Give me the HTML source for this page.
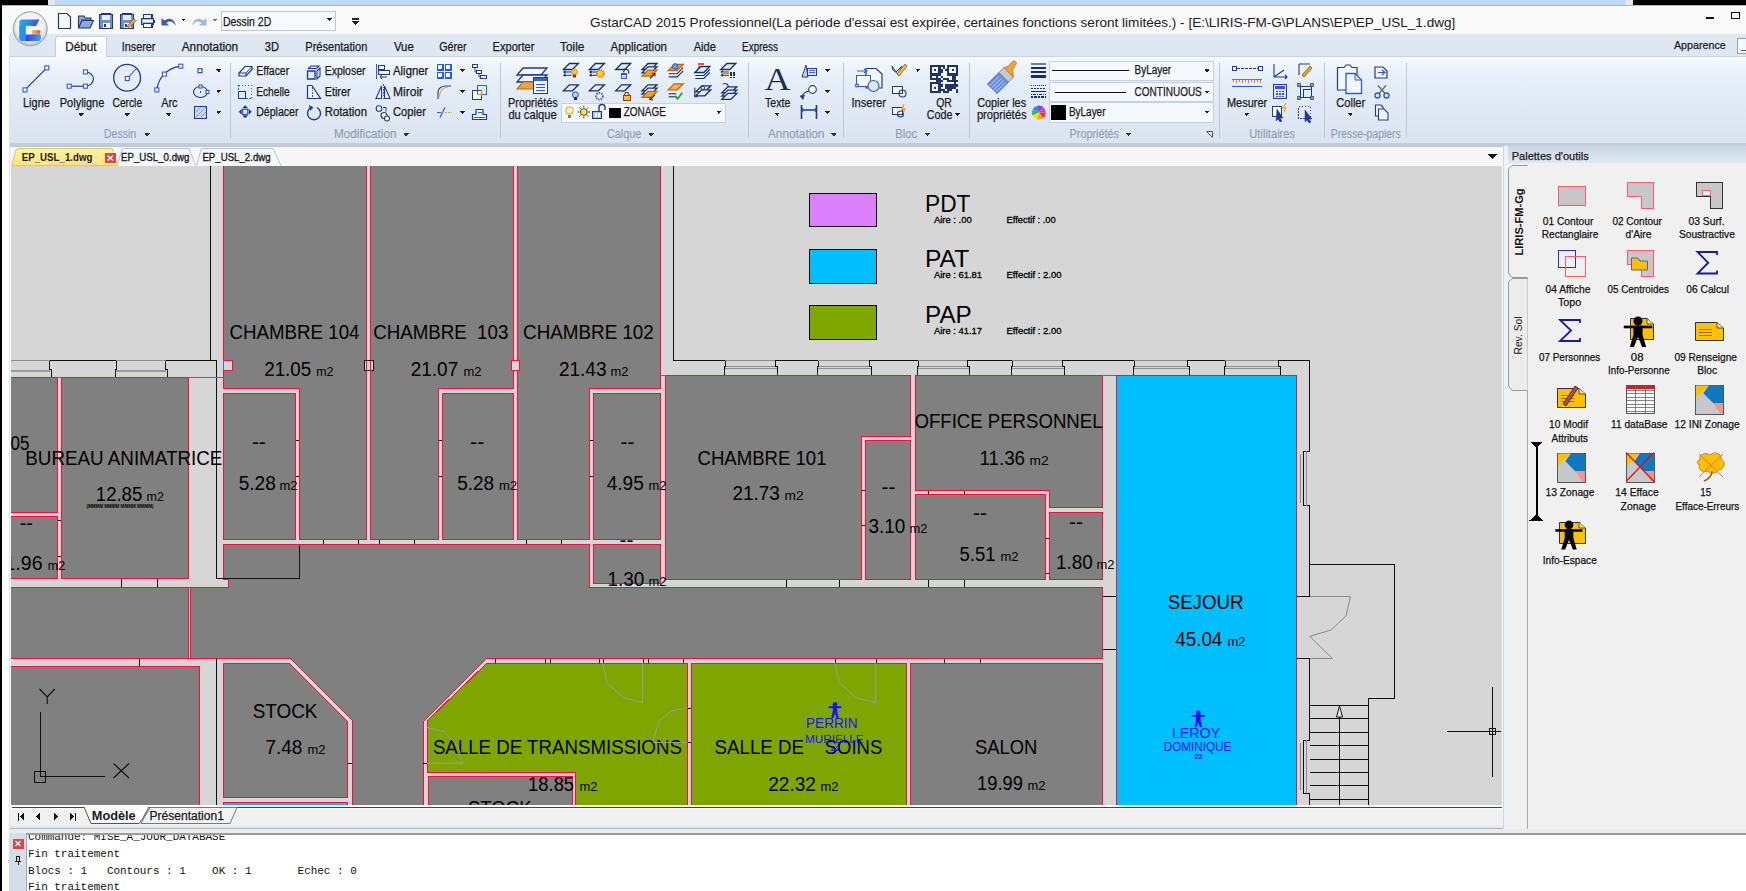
<!DOCTYPE html>
<html><head><meta charset="utf-8"><title>GstarCAD</title>
<style>
html,body{margin:0;padding:0;width:1746px;height:891px;overflow:hidden;background:#fff;}
svg{display:block;}
text{white-space:pre;}
</style></head><body>
<svg width="1746" height="891" viewBox="0 0 1746 891" shape-rendering="crispEdges">
<defs>
<linearGradient id="gRib" x1="0" y1="0" x2="0" y2="1"><stop offset="0" stop-color="#f6f9fd"/><stop offset="0.28" stop-color="#e5edf8"/><stop offset="1" stop-color="#dae4f0"/></linearGradient>
<linearGradient id="gTab" x1="0" y1="0" x2="0" y2="1"><stop offset="0" stop-color="#fdfeff"/><stop offset="1" stop-color="#f3f7fb"/></linearGradient>
<linearGradient id="gYel" x1="0" y1="0" x2="0" y2="1"><stop offset="0" stop-color="#fff4a8"/><stop offset="1" stop-color="#ffe27a"/></linearGradient>
<linearGradient id="gHdr" x1="0" y1="0" x2="0" y2="1"><stop offset="0" stop-color="#c9d6e4"/><stop offset="1" stop-color="#dfe7f1"/></linearGradient>
<radialGradient id="gLogo" cx="0.5" cy="0.4" r="0.6"><stop offset="0" stop-color="#ffffff"/><stop offset="0.8" stop-color="#e6e9ee"/><stop offset="1" stop-color="#9aa3ad"/></radialGradient>
</defs>
<rect x="0" y="0" width="1746" height="891" fill="#ffffff" stroke="none" stroke-width="1" /><rect x="0" y="0" width="48" height="5" fill="#000" stroke="none" stroke-width="1" /><rect x="48" y="0" width="7" height="5" fill="#e8e8e8" stroke="none" stroke-width="1" /><rect x="55" y="0" width="1571" height="5" fill="#bddafd" stroke="none" stroke-width="1" /><rect x="1626" y="0" width="7" height="5" fill="#e8e8e8" stroke="none" stroke-width="1" /><rect x="1633" y="0" width="113" height="5" fill="#000" stroke="none" stroke-width="1" /><rect x="0" y="5" width="2" height="886" fill="#000" stroke="none" stroke-width="1" /><rect x="2" y="5" width="1744" height="886" fill="#ffffff" stroke="none" stroke-width="1" /><rect x="2" y="5" width="1744" height="29" fill="#f9f9f9" stroke="none" stroke-width="1" /><rect x="2" y="5" width="1744" height="1" fill="#b4b4b4" stroke="none" stroke-width="1" /><rect x="2" y="6" width="1744" height="1" fill="#ffffff" stroke="none" stroke-width="1" /><rect x="9" y="34" width="1737" height="23" fill="#dfe8f2" stroke="none" stroke-width="1" /><line x1="9" y1="56.5" x2="1746" y2="56.5" stroke="#c5d3e3" stroke-width="1" /><rect x="9" y="57" width="1737" height="86" fill="url(#gRib)" stroke="none" stroke-width="1" /><rect x="9" y="142.5" width="1737" height="3.5" fill="#bfcddd" stroke="none" stroke-width="1" /><rect x="9" y="34" width="1" height="800" fill="#dbe3ee" stroke="none" stroke-width="1" /><rect x="10" y="146" width="1493" height="20" fill="#f7f7f7" stroke="none" stroke-width="1" /><rect x="10" y="146" width="1493" height="1" fill="#c4c4c4" stroke="none" stroke-width="1" /><rect x="1503" y="146" width="1" height="20" fill="#c4c4c4" stroke="none" stroke-width="1" /><rect x="11" y="166" width="1491" height="640" fill="#d6d6d6" stroke="none" stroke-width="1" /><rect x="1503" y="146" width="5" height="688" fill="#eef1f5" stroke="none" stroke-width="1" /><rect x="1508" y="147" width="238" height="683" fill="#f0f0f0" stroke="none" stroke-width="1" /><rect x="1508" y="146" width="238" height="17" fill="url(#gHdr)" stroke="none" stroke-width="1" /><rect x="10" y="806" width="1493" height="22" fill="#f0f0f0" stroke="none" stroke-width="1" /><rect x="11" y="805" width="1491" height="2" fill="#fafafa" stroke="none" stroke-width="1" /><rect x="12" y="807" width="1490" height="1.3" fill="#454545" stroke="none" stroke-width="1" /><rect x="11" y="808.3" width="1491" height="1.5" fill="#f8f8f8" stroke="none" stroke-width="1" /><line x1="1503.5" y1="146" x2="1503.5" y2="829" stroke="#c9d6e6" stroke-width="1" /><rect x="10" y="826" width="1493" height="2" fill="#e0eaf6" stroke="none" stroke-width="1" /><rect x="10" y="828" width="1493" height="1" fill="#b4b4b4" stroke="none" stroke-width="1" /><rect x="9" y="829" width="1737" height="4" fill="#ececec" stroke="none" stroke-width="1" /><rect x="2" y="833" width="1744" height="58" fill="#ffffff" stroke="none" stroke-width="1" /><rect x="9" y="833" width="18" height="58" fill="#d5dde8" stroke="none" stroke-width="1" /><g shape-rendering="geometricPrecision"><radialGradient id="gRing" cx="0.5" cy="0.45" r="0.55"><stop offset="0" stop-color="#ffffff"/><stop offset="0.75" stop-color="#eef1f5"/><stop offset="0.9" stop-color="#c9d0d8"/><stop offset="1" stop-color="#aab3bd"/></radialGradient><circle cx="30.2" cy="28.8" r="17" fill="url(#gRing)" stroke="#98a2ad" stroke-width="1"/><linearGradient id="gG" x1="0" y1="0" x2="1" y2="0.3"><stop offset="0" stop-color="#1fb0f4"/><stop offset="0.55" stop-color="#2f7cf0"/><stop offset="1" stop-color="#4a2fe4"/></linearGradient><linearGradient id="gG2" x1="0" y1="0" x2="1" y2="0"><stop offset="0" stop-color="#4a2fe4"/><stop offset="1" stop-color="#1fb0f4"/></linearGradient><linearGradient id="gO" x1="0" y1="0" x2="1" y2="0"><stop offset="0" stop-color="#ffc238"/><stop offset="1" stop-color="#ff4a10"/></linearGradient><path d="M19.3,23 Q19.3,19.6 22.5,19.6 H39.5 L36,25.9 H25.9 V34.4 H40.5 V38 Q40.5,41 37.5,41 H22.5 Q19.3,41 19.3,37.5 Z" fill="url(#gG)"/><path d="M25.9,34.4 H40.5 V38 Q40.5,41 37.5,41 H25.9 Z" fill="url(#gG2)"/><path d="M19.3,25.9 H25.9 V41 H22.5 Q19.3,41 19.3,37.5 Z" fill="#2a8ff0" opacity="0.6"/><rect x="25.9" y="25.9" width="5.7" height="8.5" fill="#f4f7fb"/><path d="M31.6,30.2 H40.5 L40,33.7 H31.6 Z" fill="url(#gO)"/></g><path d="M58.5,13.5 H67 L70.5,17 V28.5 H58.5 Z" fill="#f4f7fc" stroke="#1d3a7a" stroke-width="1.2" shape-rendering="geometricPrecision"/><path d="M78.5,16 H84 L85.5,18 H91 V20 H82 L78.5,28 Z M78.5,28 L82,20.5 H93.5 L90,28 Z" fill="#8fa6d6" stroke="#1d3a7a" stroke-width="1.1" shape-rendering="geometricPrecision"/><rect x="99.5" y="14.0" width="13" height="14.5" fill="#6f8fd0" stroke="#1d3a7a" stroke-width="1.2" rx="1.5"/><rect x="102" y="14.5" width="8" height="5" fill="#e8eef8" stroke="none" stroke-width="1" /><rect x="102.5" y="22.5" width="7" height="5.5" fill="#ffffff" stroke="none" stroke-width="1" /><rect x="103.5" y="23.5" width="2" height="3" fill="#1d3a7a" stroke="none" stroke-width="1" /><rect x="120.5" y="14.0" width="13" height="14.5" fill="#6f8fd0" stroke="#1d3a7a" stroke-width="1.2" rx="1.5"/><rect x="123" y="14.5" width="8" height="5" fill="#e8eef8" stroke="none" stroke-width="1" /><rect x="123.5" y="22.5" width="7" height="5.5" fill="#ffffff" stroke="none" stroke-width="1" /><rect x="124.5" y="23.5" width="2" height="3" fill="#1d3a7a" stroke="none" stroke-width="1" /><path d="M127,26.5 L134,18.5 L136,20.5 L129,27.5 Z" fill="#f3b83a" stroke="#7a4b10" stroke-width="0.8" shape-rendering="geometricPrecision"/><rect x="143.5" y="14.5" width="8.5" height="4" fill="#e8eef8" stroke="#1d3a7a" stroke-width="1.2" /><rect x="141.5" y="18.5" width="12.5" height="6" fill="#9db4e4" stroke="#1d3a7a" stroke-width="1.3" rx="1.5"/><rect x="142.5" y="20" width="10.5" height="2" fill="#f4f7fc" stroke="none" stroke-width="1" /><rect x="143.5" y="23.5" width="8.5" height="4" fill="#ffffff" stroke="#1d3a7a" stroke-width="1.2" /><path d="M161.5,18 L161.5,25.5 L169,25.5 L166.5,23 C169,20.5 173,21 175.8,26 C175,19.5 170,16.5 164.5,20.5 Z" fill="#3b5db9" stroke="none" stroke-width="1" shape-rendering="geometricPrecision"/><path d="M181,18.5 L186,18.5 L183.5,21.5 Z" fill="#111" stroke="none" stroke-width="1" /><path d="M206.5,18 L206.5,25.5 L199,25.5 L201.5,23 C199,20.5 195,21 192.2,26 C193,19.5 198,16.5 203.5,20.5 Z" fill="#a3b5dc" stroke="none" stroke-width="1" shape-rendering="geometricPrecision"/><path d="M212.5,18.5 L217.5,18.5 L215,21.5 Z" fill="#777" stroke="none" stroke-width="1" /><rect x="221.5" y="11.5" width="114" height="19" fill="#f7f9fc" stroke="#b9c9dd" stroke-width="1" /><text x="222.9" y="26" font-size="12.5" fill="#1b1b1b" font-family="&quot;Liberation Sans&quot;, sans-serif" textLength="48.4" lengthAdjust="spacingAndGlyphs" stroke="#1b1b1b" stroke-width="0.25">Dessin 2D</text><path d="M326.5,18 L332.5,18 L329.5,21.5 Z" fill="#222" stroke="none" stroke-width="1" /><rect x="352" y="18" width="7" height="1.5" fill="#222" stroke="none" stroke-width="1" /><path d="M352,21 L359,21 L355.5,25 Z" fill="#222" stroke="none" stroke-width="1" /><text x="590.1" y="27.2" font-size="13.5" fill="#202020" font-family="&quot;Liberation Sans&quot;, sans-serif" textLength="865.2" lengthAdjust="spacingAndGlyphs" >GstarCAD 2015 Professionnel(La période d&#x27;essai est expirée, certaines fonctions seront limitées.) - [E:\LIRIS-FM-G\PLANS\EP\EP_USL_1.dwg]</text><rect x="1706" y="17" width="8" height="2" fill="#111" stroke="none" stroke-width="1" /><rect x="1731.5" y="12.5" width="8" height="6" fill="none" stroke="#111" stroke-width="1.3" /><path d="M55.5,57 V39 Q55.5,36.5 58,36.5 H104 Q106.5,36.5 106.5,39 V57" fill="url(#gTab)" stroke="#c2d0e2" stroke-width="1" /><rect x="56" y="54" width="50" height="4" fill="#f8fafd" stroke="none" stroke-width="1" /><text x="65.2" y="51.2" font-size="12" fill="#1b1b1b" font-family="&quot;Liberation Sans&quot;, sans-serif" textLength="31.2" lengthAdjust="spacingAndGlyphs" stroke="#1b1b1b" stroke-width="0.25">Début</text><text x="121.7" y="51.2" font-size="12" fill="#1b1b1b" font-family="&quot;Liberation Sans&quot;, sans-serif" textLength="33.7" lengthAdjust="spacingAndGlyphs" stroke="#1b1b1b" stroke-width="0.25">Inserer</text><text x="181.7" y="51.2" font-size="12" fill="#1b1b1b" font-family="&quot;Liberation Sans&quot;, sans-serif" textLength="56.5" lengthAdjust="spacingAndGlyphs" stroke="#1b1b1b" stroke-width="0.25">Annotation</text><text x="264.8" y="51.2" font-size="12" fill="#1b1b1b" font-family="&quot;Liberation Sans&quot;, sans-serif" textLength="14.3" lengthAdjust="spacingAndGlyphs" stroke="#1b1b1b" stroke-width="0.25">3D</text><text x="305.3" y="51.2" font-size="12" fill="#1b1b1b" font-family="&quot;Liberation Sans&quot;, sans-serif" textLength="62.0" lengthAdjust="spacingAndGlyphs" stroke="#1b1b1b" stroke-width="0.25">Présentation</text><text x="393.9" y="51.2" font-size="12" fill="#1b1b1b" font-family="&quot;Liberation Sans&quot;, sans-serif" textLength="19.9" lengthAdjust="spacingAndGlyphs" stroke="#1b1b1b" stroke-width="0.25">Vue</text><text x="439.2" y="51.2" font-size="12" fill="#1b1b1b" font-family="&quot;Liberation Sans&quot;, sans-serif" textLength="27.4" lengthAdjust="spacingAndGlyphs" stroke="#1b1b1b" stroke-width="0.25">Gérer</text><text x="492.6" y="51.2" font-size="12" fill="#1b1b1b" font-family="&quot;Liberation Sans&quot;, sans-serif" textLength="41.8" lengthAdjust="spacingAndGlyphs" stroke="#1b1b1b" stroke-width="0.25">Exporter</text><text x="560.1" y="51.2" font-size="12" fill="#1b1b1b" font-family="&quot;Liberation Sans&quot;, sans-serif" textLength="24.2" lengthAdjust="spacingAndGlyphs" stroke="#1b1b1b" stroke-width="0.25">Toile</text><text x="610.5" y="51.2" font-size="12" fill="#1b1b1b" font-family="&quot;Liberation Sans&quot;, sans-serif" textLength="56.5" lengthAdjust="spacingAndGlyphs" stroke="#1b1b1b" stroke-width="0.25">Application</text><text x="693.7" y="51.2" font-size="12" fill="#1b1b1b" font-family="&quot;Liberation Sans&quot;, sans-serif" textLength="22.2" lengthAdjust="spacingAndGlyphs" stroke="#1b1b1b" stroke-width="0.25">Aide</text><text x="742.1" y="51.2" font-size="12" fill="#1b1b1b" font-family="&quot;Liberation Sans&quot;, sans-serif" textLength="35.8" lengthAdjust="spacingAndGlyphs" stroke="#1b1b1b" stroke-width="0.25">Express</text><text x="1673.9" y="49.4" font-size="11.5" fill="#1b1b1b" font-family="&quot;Liberation Sans&quot;, sans-serif" textLength="51.8" lengthAdjust="spacingAndGlyphs" stroke="#1b1b1b" stroke-width="0.25">Apparence</text><rect x="1737.5" y="38.5" width="10" height="15" fill="#f4f7fb" stroke="#8e9fb6" stroke-width="1" /><rect x="1741" y="50" width="5" height="1" fill="#555" stroke="none" stroke-width="1" /><line x1="230.5" y1="63" x2="230.5" y2="138" stroke="#b9c8da" stroke-width="1" /><line x1="500.5" y1="63" x2="500.5" y2="138" stroke="#b9c8da" stroke-width="1" /><line x1="748.5" y1="63" x2="748.5" y2="138" stroke="#b9c8da" stroke-width="1" /><line x1="843.5" y1="63" x2="843.5" y2="138" stroke="#b9c8da" stroke-width="1" /><line x1="969.5" y1="63" x2="969.5" y2="138" stroke="#b9c8da" stroke-width="1" /><line x1="1219.5" y1="63" x2="1219.5" y2="138" stroke="#b9c8da" stroke-width="1" /><line x1="1324.5" y1="63" x2="1324.5" y2="138" stroke="#b9c8da" stroke-width="1" /><line x1="1406.5" y1="63" x2="1406.5" y2="138" stroke="#b9c8da" stroke-width="1" /><text x="104.0" y="137.5" font-size="12" fill="#8c9bb3" font-family="&quot;Liberation Sans&quot;, sans-serif" textLength="32.2" lengthAdjust="spacingAndGlyphs" stroke="#8c9bb3" stroke-width="0.12">Dessin</text><path d="M144.2,133 L150.2,133 L147.2,136.5 Z" fill="#333" stroke="none" stroke-width="1" /><text x="334.0" y="137.5" font-size="12" fill="#8c9bb3" font-family="&quot;Liberation Sans&quot;, sans-serif" textLength="62.4" lengthAdjust="spacingAndGlyphs" stroke="#8c9bb3" stroke-width="0.12">Modification</text><path d="M403.2,133 L409.2,133 L406.2,136.5 Z" fill="#333" stroke="none" stroke-width="1" /><text x="607.0" y="137.5" font-size="12" fill="#8c9bb3" font-family="&quot;Liberation Sans&quot;, sans-serif" textLength="34.3" lengthAdjust="spacingAndGlyphs" stroke="#8c9bb3" stroke-width="0.12">Calque</text><path d="M648.1,133 L654.1,133 L651.1,136.5 Z" fill="#333" stroke="none" stroke-width="1" /><text x="768.0" y="137.5" font-size="12" fill="#8c9bb3" font-family="&quot;Liberation Sans&quot;, sans-serif" textLength="56.4" lengthAdjust="spacingAndGlyphs" stroke="#8c9bb3" stroke-width="0.12">Annotation</text><path d="M830.9,133 L836.9,133 L833.9,136.5 Z" fill="#333" stroke="none" stroke-width="1" /><text x="895.3" y="137.5" font-size="12" fill="#8c9bb3" font-family="&quot;Liberation Sans&quot;, sans-serif" textLength="21.8" lengthAdjust="spacingAndGlyphs" stroke="#8c9bb3" stroke-width="0.12">Bloc</text><path d="M924.5,133 L930.5,133 L927.5,136.5 Z" fill="#333" stroke="none" stroke-width="1" /><text x="1069.6" y="137.5" font-size="12" fill="#8c9bb3" font-family="&quot;Liberation Sans&quot;, sans-serif" textLength="49.3" lengthAdjust="spacingAndGlyphs" stroke="#8c9bb3" stroke-width="0.12">Propriétés</text><path d="M1125.6,133 L1131.6,133 L1128.6,136.5 Z" fill="#333" stroke="none" stroke-width="1" /><text x="1249.3" y="137.5" font-size="12" fill="#8c9bb3" font-family="&quot;Liberation Sans&quot;, sans-serif" textLength="45.8" lengthAdjust="spacingAndGlyphs" stroke="#8c9bb3" stroke-width="0.12">Utilitaires</text><text x="1330.8" y="137.5" font-size="12" fill="#8c9bb3" font-family="&quot;Liberation Sans&quot;, sans-serif" textLength="69.9" lengthAdjust="spacingAndGlyphs" stroke="#8c9bb3" stroke-width="0.12">Presse-papiers</text><text x="23.0" y="106.6" font-size="12" fill="#1b1b1b" font-family="&quot;Liberation Sans&quot;, sans-serif" textLength="26.9" lengthAdjust="spacingAndGlyphs" stroke="#1b1b1b" stroke-width="0.25">Ligne</text><text x="59.8" y="106.6" font-size="12" fill="#1b1b1b" font-family="&quot;Liberation Sans&quot;, sans-serif" textLength="44.5" lengthAdjust="spacingAndGlyphs" stroke="#1b1b1b" stroke-width="0.25">Polyligne</text><path d="M78.3,113.1 L84.3,113.1 L81.3,116.6 Z" fill="#222" stroke="none" stroke-width="1" /><text x="112.5" y="106.6" font-size="12" fill="#1b1b1b" font-family="&quot;Liberation Sans&quot;, sans-serif" textLength="29.6" lengthAdjust="spacingAndGlyphs" stroke="#1b1b1b" stroke-width="0.25">Cercle</text><path d="M124.3,113.1 L130.3,113.1 L127.3,116.6 Z" fill="#222" stroke="none" stroke-width="1" /><text x="161.3" y="106.6" font-size="12" fill="#1b1b1b" font-family="&quot;Liberation Sans&quot;, sans-serif" textLength="16.2" lengthAdjust="spacingAndGlyphs" stroke="#1b1b1b" stroke-width="0.25">Arc</text><path d="M165.6,113.1 L171.6,113.1 L168.6,116.6 Z" fill="#222" stroke="none" stroke-width="1" /><path d="M215.7,69.0 L221.7,69.0 L218.7,72.5 Z" fill="#222" stroke="none" stroke-width="1" /><path d="M215.7,89.5 L221.7,89.5 L218.7,93 Z" fill="#222" stroke="none" stroke-width="1" /><path d="M215.7,110.5 L221.7,110.5 L218.7,114 Z" fill="#222" stroke="none" stroke-width="1" /><text x="256.2" y="74.8" font-size="12" fill="#1b1b1b" font-family="&quot;Liberation Sans&quot;, sans-serif" textLength="33.0" lengthAdjust="spacingAndGlyphs" stroke="#1b1b1b" stroke-width="0.25">Effacer</text><text x="256.2" y="95.5" font-size="12" fill="#1b1b1b" font-family="&quot;Liberation Sans&quot;, sans-serif" textLength="33.5" lengthAdjust="spacingAndGlyphs" stroke="#1b1b1b" stroke-width="0.25">Echelle</text><text x="256.2" y="116" font-size="12" fill="#1b1b1b" font-family="&quot;Liberation Sans&quot;, sans-serif" textLength="42.3" lengthAdjust="spacingAndGlyphs" stroke="#1b1b1b" stroke-width="0.25">Déplacer</text><text x="324.7" y="74.8" font-size="12" fill="#1b1b1b" font-family="&quot;Liberation Sans&quot;, sans-serif" textLength="40.8" lengthAdjust="spacingAndGlyphs" stroke="#1b1b1b" stroke-width="0.25">Exploser</text><text x="324.7" y="95.5" font-size="12" fill="#1b1b1b" font-family="&quot;Liberation Sans&quot;, sans-serif" textLength="25.8" lengthAdjust="spacingAndGlyphs" stroke="#1b1b1b" stroke-width="0.25">Etirer</text><text x="324.7" y="116" font-size="12" fill="#1b1b1b" font-family="&quot;Liberation Sans&quot;, sans-serif" textLength="42.3" lengthAdjust="spacingAndGlyphs" stroke="#1b1b1b" stroke-width="0.25">Rotation</text><text x="393.0" y="74.8" font-size="12" fill="#1b1b1b" font-family="&quot;Liberation Sans&quot;, sans-serif" textLength="35.4" lengthAdjust="spacingAndGlyphs" stroke="#1b1b1b" stroke-width="0.25">Aligner</text><text x="393.0" y="95.5" font-size="12" fill="#1b1b1b" font-family="&quot;Liberation Sans&quot;, sans-serif" textLength="30.1" lengthAdjust="spacingAndGlyphs" stroke="#1b1b1b" stroke-width="0.25">Miroir</text><text x="393.0" y="116" font-size="12" fill="#1b1b1b" font-family="&quot;Liberation Sans&quot;, sans-serif" textLength="33.0" lengthAdjust="spacingAndGlyphs" stroke="#1b1b1b" stroke-width="0.25">Copier</text><path d="M459.4,69.0 L465.4,69.0 L462.4,72.5 Z" fill="#222" stroke="none" stroke-width="1" /><path d="M459.4,90.0 L465.4,90.0 L462.4,93.5 Z" fill="#222" stroke="none" stroke-width="1" /><path d="M459.4,110.5 L465.4,110.5 L462.4,114 Z" fill="#222" stroke="none" stroke-width="1" /><text x="508.1" y="106.8" font-size="12" fill="#1b1b1b" font-family="&quot;Liberation Sans&quot;, sans-serif" textLength="49.7" lengthAdjust="spacingAndGlyphs" stroke="#1b1b1b" stroke-width="0.25">Propriétés</text><text x="508.4" y="118.7" font-size="12" fill="#1b1b1b" font-family="&quot;Liberation Sans&quot;, sans-serif" textLength="48.3" lengthAdjust="spacingAndGlyphs" stroke="#1b1b1b" stroke-width="0.25">du calque</text><rect x="561.5" y="103.5" width="164" height="19" fill="#f5f8fc" stroke="#c3d1e3" stroke-width="1" /><rect x="609" y="107.5" width="11.5" height="10.5" fill="#000" stroke="none" stroke-width="1" /><text x="623.7" y="116" font-size="12" fill="#1b1b1b" font-family="&quot;Liberation Sans&quot;, sans-serif" textLength="42.3" lengthAdjust="spacingAndGlyphs" stroke="#1b1b1b" stroke-width="0.25">ZONAGE</text><path d="M715.9,110.5 L721.9,110.5 L718.9,114 Z" fill="#222" stroke="none" stroke-width="1" /><text x="764.5" y="89.5" font-size="31" fill="#1c2d55" font-family="&quot;Liberation Serif&quot;, serif" textLength="26" lengthAdjust="spacingAndGlyphs" >A</text><text x="765.1" y="106.8" font-size="12" fill="#1b1b1b" font-family="&quot;Liberation Sans&quot;, sans-serif" textLength="25.2" lengthAdjust="spacingAndGlyphs" stroke="#1b1b1b" stroke-width="0.25">Texte</text><path d="M774.2,112.5 L780.2,112.5 L777.2,116 Z" fill="#222" stroke="none" stroke-width="1" /><path d="M824.4,69.0 L830.4,69.0 L827.4,72.5 Z" fill="#222" stroke="none" stroke-width="1" /><path d="M824.4,90.0 L830.4,90.0 L827.4,93.5 Z" fill="#222" stroke="none" stroke-width="1" /><path d="M824.4,110.5 L830.4,110.5 L827.4,114 Z" fill="#222" stroke="none" stroke-width="1" /><text x="851.5" y="106.8" font-size="12" fill="#1b1b1b" font-family="&quot;Liberation Sans&quot;, sans-serif" textLength="34.4" lengthAdjust="spacingAndGlyphs" stroke="#1b1b1b" stroke-width="0.25">Inserer</text><path d="M914.9,68.5 L920.9,68.5 L917.9,72 Z" fill="#222" stroke="none" stroke-width="1" /><text x="936.2" y="106.8" font-size="12" fill="#1b1b1b" font-family="&quot;Liberation Sans&quot;, sans-serif" textLength="15.7" lengthAdjust="spacingAndGlyphs" stroke="#1b1b1b" stroke-width="0.25">QR</text><text x="926.7" y="118.7" font-size="12" fill="#1b1b1b" font-family="&quot;Liberation Sans&quot;, sans-serif" textLength="25.7" lengthAdjust="spacingAndGlyphs" stroke="#1b1b1b" stroke-width="0.25">Code</text><path d="M954.6,112.5 L960.6,112.5 L957.6,116 Z" fill="#222" stroke="none" stroke-width="1" /><text x="977.2" y="106.8" font-size="12" fill="#1b1b1b" font-family="&quot;Liberation Sans&quot;, sans-serif" textLength="48.9" lengthAdjust="spacingAndGlyphs" stroke="#1b1b1b" stroke-width="0.25">Copier les</text><text x="976.9" y="118.7" font-size="12" fill="#1b1b1b" font-family="&quot;Liberation Sans&quot;, sans-serif" textLength="49.6" lengthAdjust="spacingAndGlyphs" stroke="#1b1b1b" stroke-width="0.25">propriétés</text><rect x="1049.5" y="61.5" width="164" height="19" fill="#f5f8fc" stroke="#c3d1e3" stroke-width="1" /><rect x="1049.5" y="82" width="164" height="19" fill="#f5f8fc" stroke="#c3d1e3" stroke-width="1" /><rect x="1049.5" y="102.5" width="164" height="20" fill="#f5f8fc" stroke="#c3d1e3" stroke-width="1" /><line x1="1051.5" y1="70.5" x2="1128.5" y2="70.5" stroke="#111" stroke-width="1.2" /><text x="1134.6" y="74.3" font-size="12" fill="#1b1b1b" font-family="&quot;Liberation Sans&quot;, sans-serif" textLength="36.6" lengthAdjust="spacingAndGlyphs" stroke="#1b1b1b" stroke-width="0.25">ByLayer</text><path d="M1204,68.8 L1210,68.8 L1207,72.3 Z" fill="#222" stroke="none" stroke-width="1" /><line x1="1055" y1="92.5" x2="1126" y2="92.5" stroke="#111" stroke-width="1.2" /><text x="1134.6" y="95.5" font-size="12" fill="#1b1b1b" font-family="&quot;Liberation Sans&quot;, sans-serif" textLength="67.2" lengthAdjust="spacingAndGlyphs" stroke="#1b1b1b" stroke-width="0.25">CONTINUOUS</text><path d="M1204,90.5 L1210,90.5 L1207,94 Z" fill="#222" stroke="none" stroke-width="1" /><rect x="1051" y="105" width="15" height="15" fill="#000" stroke="none" stroke-width="1" /><text x="1068.9" y="116" font-size="12" fill="#1b1b1b" font-family="&quot;Liberation Sans&quot;, sans-serif" textLength="36.6" lengthAdjust="spacingAndGlyphs" stroke="#1b1b1b" stroke-width="0.25">ByLayer</text><path d="M1204,110.5 L1210,110.5 L1207,114 Z" fill="#222" stroke="none" stroke-width="1" /><path d="M1206.5,131.5 H1212.5 V137.5 M1207,132 L1212,137" fill="none" stroke="#555" stroke-width="1" shape-rendering="geometricPrecision"/><text x="1226.9" y="106.8" font-size="12" fill="#1b1b1b" font-family="&quot;Liberation Sans&quot;, sans-serif" textLength="40.4" lengthAdjust="spacingAndGlyphs" stroke="#1b1b1b" stroke-width="0.25">Mesurer</text><path d="M1243.7,112.5 L1249.7,112.5 L1246.7,116 Z" fill="#222" stroke="none" stroke-width="1" /><text x="1336.3" y="106.8" font-size="12" fill="#1b1b1b" font-family="&quot;Liberation Sans&quot;, sans-serif" textLength="28.9" lengthAdjust="spacingAndGlyphs" stroke="#1b1b1b" stroke-width="0.25">Coller</text><path d="M1347.3,112.5 L1353.3,112.5 L1350.3,116 Z" fill="#222" stroke="none" stroke-width="1" /><path d="M25,89.9 L46.8,67.9" fill="none" stroke="#1f3b8c" stroke-width="1.2" shape-rendering="geometricPrecision"/><rect x="23.0" y="87.9" width="4" height="4" fill="#fff" stroke="#2f5bd6" stroke-width="1.1" shape-rendering="geometricPrecision"/><rect x="44.8" y="65.9" width="4" height="4" fill="#fff" stroke="#2f5bd6" stroke-width="1.1" shape-rendering="geometricPrecision"/><path d="M69.2,86.2 H85.4" fill="none" stroke="#1f3b8c" stroke-width="1.2" shape-rendering="geometricPrecision"/><path d="M85.4,71.9 C96,72 96,86 85.4,86.2" fill="none" stroke="#1f3b8c" stroke-width="1.2" shape-rendering="geometricPrecision"/><rect x="67.2" y="84.2" width="4" height="4" fill="#fff" stroke="#2f5bd6" stroke-width="1.1" shape-rendering="geometricPrecision"/><rect x="83.4" y="84.2" width="4" height="4" fill="#fff" stroke="#2f5bd6" stroke-width="1.1" shape-rendering="geometricPrecision"/><rect x="83.4" y="69.9" width="4" height="4" fill="#fff" stroke="#2f5bd6" stroke-width="1.1" shape-rendering="geometricPrecision"/><circle cx="127.1" cy="77.7" r="13.4" fill="#e6edf8" stroke="#1f3b8c" stroke-width="1.3" shape-rendering="geometricPrecision"/><path d="M127.3,78.5 L136,69" fill="none" stroke="#2f5bd6" stroke-width="1.1" shape-rendering="geometricPrecision"/><rect x="125.3" y="76.5" width="4" height="4" fill="#fff" stroke="#2f5bd6" stroke-width="1.1" shape-rendering="geometricPrecision"/><path d="M156.8,89.9 C158,82 161,77 164.4,74.1 C169,69 175,67 180.8,66.2" fill="none" stroke="#1f3b8c" stroke-width="1.2" shape-rendering="geometricPrecision"/><rect x="154.8" y="87.9" width="4" height="4" fill="#fff" stroke="#2f5bd6" stroke-width="1.1" shape-rendering="geometricPrecision"/><rect x="162.4" y="72.1" width="4" height="4" fill="#fff" stroke="#2f5bd6" stroke-width="1.1" shape-rendering="geometricPrecision"/><rect x="178.8" y="64.2" width="4" height="4" fill="#fff" stroke="#2f5bd6" stroke-width="1.1" shape-rendering="geometricPrecision"/><rect x="198.0" y="68.8" width="4" height="4" fill="#fff" stroke="#1f3b8c" stroke-width="1.1" shape-rendering="geometricPrecision"/><ellipse cx="200.5" cy="92" rx="7" ry="5.5" fill="none" stroke="#1f3b8c" stroke-width="1.2" shape-rendering="geometricPrecision"/><rect x="199.0" y="85.0" width="3" height="3" fill="#fff" stroke="#2f5bd6" stroke-width="1.1" shape-rendering="geometricPrecision"/><rect x="206.0" y="90.5" width="3" height="3" fill="#fff" stroke="#2f5bd6" stroke-width="1.1" shape-rendering="geometricPrecision"/><circle cx="200.5" cy="92" r="1" fill="#1f3b8c"/><rect x="194.5" y="106.5" width="12" height="12" fill="#c9d6ee" stroke="#1f3b8c" stroke-width="1.2" /><path d="M196,112 L201,107 M196,117 L206,107 M201,117 L206,112" fill="none" stroke="#7f9ad6" stroke-width="1" shape-rendering="geometricPrecision"/><path d="M239,73.0 L245,66.5 H252 V69.5 L246,76.0 H239 Z" fill="#f0f4fb" stroke="#1f3b8c" stroke-width="1.2" shape-rendering="geometricPrecision"/><path d="M239,73.0 H246 L252,66.5 M246,73.0 V76.0" fill="none" stroke="#1f3b8c" stroke-width="1" shape-rendering="geometricPrecision"/><rect x="238.5" y="85.5" width="13" height="13" fill="none" stroke="#2f5bd6" stroke-width="1" stroke-dasharray="1.5,1.5"/><rect x="238.5" y="91.5" width="7" height="7" fill="none" stroke="#1f3b8c" stroke-width="1.3" /><path d="M245.2,105.3 L242.2,108.3 H248.2 Z M245.2,118.3 L242.2,115.3 H248.2 Z M238.7,111.8 L241.7,108.8 V114.8 Z M251.7,111.8 L248.7,108.8 V114.8 Z" fill="#1f3b8c" stroke="none" stroke-width="1.1" shape-rendering="geometricPrecision"/><rect x="242.7" y="109.3" width="5" height="5" fill="#e8eefa" stroke="#2f5bd6" stroke-width="1.2" shape-rendering="geometricPrecision"/><path d="M307.5,71 H315 V79 H307.5 Z" fill="#e6ecf8" stroke="#1f3b8c" stroke-width="1.3" shape-rendering="geometricPrecision"/><path d="M308.5,68.5 L311,66 H319 L316.5,68.5 Z" fill="#e6ecf8" stroke="#1f3b8c" stroke-width="1.1" shape-rendering="geometricPrecision"/><path d="M317,71 L320,68 V76 L317,79 Z" fill="#e6ecf8" stroke="#1f3b8c" stroke-width="1.1" shape-rendering="geometricPrecision"/><path d="M307.5,85.5 H312 L320.5,98.5 H307.5 Z" fill="#eef2fa" stroke="#1f3b8c" stroke-width="1.2" shape-rendering="geometricPrecision"/><line x1="312.5" y1="87" x2="312.5" y2="98" stroke="#2f5bd6" stroke-width="1" stroke-dasharray="1.5,1.2"/><path d="M311,107.5 A6.5,6.5 0 1 0 317,107.5" fill="none" stroke="#1f3b8c" stroke-width="1.4" shape-rendering="geometricPrecision"/><path d="M309,105.5 L313,107.5 L310,110.5" fill="#1f3b8c" stroke="#1f3b8c" stroke-width="0.8" shape-rendering="geometricPrecision"/><line x1="376.5" y1="64" x2="376.5" y2="79" stroke="#2f5bd6" stroke-width="1.2" /><rect x="378.5" y="65.5" width="6" height="4" fill="#eef2fa" stroke="#1f3b8c" stroke-width="1.1" /><rect x="378.5" y="70.5" width="11" height="4" fill="#eef2fa" stroke="#1f3b8c" stroke-width="1.1" /><path d="M387,77 H380 M382,75 L380,77 L382,79" fill="none" stroke="#1f3b8c" stroke-width="1" shape-rendering="geometricPrecision"/><path d="M381.5,86 L376,98.5 H381.5 Z M384.5,86 L390,98.5 H384.5 Z" fill="#eef2fa" stroke="#1f3b8c" stroke-width="1.1" shape-rendering="geometricPrecision"/><line x1="383" y1="84" x2="383" y2="100" stroke="#2f5bd6" stroke-width="1" stroke-dasharray="1.5,1.2"/><circle cx="379" cy="108.5" r="2.8" fill="#fff" stroke="#1f3b8c" stroke-width="1.1" shape-rendering="geometricPrecision"/><circle cx="384" cy="115.5" r="3" fill="#fff" stroke="#1f3b8c" stroke-width="1.1" shape-rendering="geometricPrecision"/><circle cx="387" cy="118.5" r="2.5" fill="#fff" stroke="#1f3b8c" stroke-width="1.1" shape-rendering="geometricPrecision"/><path d="M383,107.5 H386 V111.5" fill="none" stroke="#1f3b8c" stroke-width="1" shape-rendering="geometricPrecision"/><rect x="437.5" y="64.5" width="5.5" height="5.5" fill="#fff" stroke="#2f5bd6" stroke-width="1.2" /><rect x="437.5" y="72.5" width="5.5" height="5.5" fill="#fff" stroke="#2f5bd6" stroke-width="1.2" /><rect x="445.5" y="64.5" width="5.5" height="5.5" fill="#fff" stroke="#2f5bd6" stroke-width="1.2" /><rect x="445.5" y="72.5" width="5.5" height="5.5" fill="#fff" stroke="#2f5bd6" stroke-width="1.2" /><path d="M438,99 V92 C438,88 442,86 446,86 H451" fill="none" stroke="#1f3b8c" stroke-width="1.1" shape-rendering="geometricPrecision"/><path d="M439,97 C440,91 443,87 448,87" fill="none" stroke="#f0a020" stroke-width="1.1" shape-rendering="geometricPrecision"/><path d="M437,112.5 H441 M440,117.5 L445,107.5" fill="none" stroke="#2f5bd6" stroke-width="1.2" shape-rendering="geometricPrecision"/><line x1="445" y1="112.5" x2="452" y2="112.5" stroke="#f0a020" stroke-width="1.2" stroke-dasharray="1.6,1.4"/><rect x="472.5" y="64.5" width="5" height="3" fill="#fff" stroke="#1f3b8c" stroke-width="1.1" /><rect x="476.5" y="70.5" width="5" height="3" fill="#fff" stroke="#1f3b8c" stroke-width="1.1" /><rect x="480.5" y="75.5" width="6" height="3" fill="#fff" stroke="#1f3b8c" stroke-width="1.1" /><path d="M475,68 V72 H476 M479,74 V77 H480" fill="none" stroke="#1f3b8c" stroke-width="0.9" shape-rendering="geometricPrecision"/><rect x="472.5" y="90.5" width="9" height="9" fill="#fff" stroke="#1f3b8c" stroke-width="1.2" /><rect x="477.5" y="85.5" width="9" height="9" fill="none" stroke="#2f5bd6" stroke-width="1.1" /><path d="M477.5,94.5 H481.5 V90.5" fill="none" stroke="#f0a020" stroke-width="1.4" shape-rendering="geometricPrecision"/><path d="M472.5,119.5 H486.5 V114.5 H483 V109.5 H476 V114.5 H472.5 Z" fill="#eef2fa" stroke="#1f3b8c" stroke-width="1.2" shape-rendering="geometricPrecision"/><path d="M474,117.5 H485 M478,112.5 H482" fill="none" stroke="#2f5bd6" stroke-width="1" shape-rendering="geometricPrecision"/><path d="M523,68 H547 L541,75 H517 Z" fill="#f4f7fc" stroke="#1f3b8c" stroke-width="1.3" shape-rendering="geometricPrecision"/><path d="M523,75 H547 L541,82 H517 Z" fill="#eef2fa" stroke="#1f3b8c" stroke-width="1.3" shape-rendering="geometricPrecision"/><path d="M523,82 H547 L541,89 H517 Z" fill="#f2a43a" stroke="#b06a10" stroke-width="1.1" shape-rendering="geometricPrecision"/><rect x="533.5" y="77.5" width="14" height="16" fill="#f4f7fc" stroke="#1f3b8c" stroke-width="1.5" /><rect x="534" y="78" width="13" height="3" fill="#3b64c8" stroke="none" stroke-width="1" /><line x1="536" y1="84.5" x2="545" y2="84.5" stroke="#2f5bd6" stroke-width="1" /><line x1="536" y1="87.5" x2="545" y2="87.5" stroke="#2f5bd6" stroke-width="1" /><line x1="536" y1="90.5" x2="545" y2="90.5" stroke="#2f5bd6" stroke-width="1" /><path d="M569.4,63.5 H578.4 L572.4,69.5 H563.4 Z" fill="#e4ecf8" stroke="#15306e" stroke-width="1.3" shape-rendering="geometricPrecision"/><path d="M563.9,72.0 H571.4 M565.4,70.8 L563.9,72.0 L565.4,73.2" fill="none" stroke="#15306e" stroke-width="1.1" shape-rendering="geometricPrecision"/><path d="M563.9,75.2 H571.4 M565.4,74.0 L563.9,75.2 L565.4,76.4" fill="none" stroke="#15306e" stroke-width="1.1" shape-rendering="geometricPrecision"/><circle cx="574.4" cy="72.0" r="3" fill="#ffc22a" stroke="#e08a10" stroke-width="0.8" shape-rendering="geometricPrecision"/><circle cx="574.4" cy="76.0" r="1.8" fill="#7a3a20" shape-rendering="geometricPrecision"/><path d="M569.4,84.8 H578.4 L572.4,90.8 H563.4 Z" fill="#e4ecf8" stroke="#15306e" stroke-width="1.3" shape-rendering="geometricPrecision"/><circle cx="575.4" cy="94.8" r="3" fill="#b8ccf8" stroke="#2a4ab0" stroke-width="1" shape-rendering="geometricPrecision"/><rect x="574.1999999999999" y="97.3" width="2.5" height="2.5" fill="#15306e" stroke="none" stroke-width="1" /><path d="M595.4,63.5 H604.4 L598.4,69.5 H589.4 Z" fill="#e4ecf8" stroke="#15306e" stroke-width="1.3" shape-rendering="geometricPrecision"/><path d="M589.9,72.0 H597.4 M591.4,70.8 L589.9,72.0 L591.4,73.2" fill="none" stroke="#15306e" stroke-width="1.1" shape-rendering="geometricPrecision"/><path d="M589.9,75.2 H597.4 M591.4,74.0 L589.9,75.2 L591.4,76.4" fill="none" stroke="#15306e" stroke-width="1.1" shape-rendering="geometricPrecision"/><circle cx="600.4" cy="73.5" r="3.6" fill="#ffd020" stroke="#ff5a10" stroke-width="1.5" stroke-dasharray="1.2,0.9" shape-rendering="geometricPrecision"/><path d="M595.4,84.8 H604.4 L598.4,90.8 H589.4 Z" fill="#e4ecf8" stroke="#15306e" stroke-width="1.3" shape-rendering="geometricPrecision"/><circle cx="599.4" cy="96.3" r="3.3" fill="#f4f7fc" stroke="#4060c0" stroke-width="2" stroke-dasharray="1.4,1" shape-rendering="geometricPrecision"/><path d="M621.7,63.5 H630.7 L624.7,69.5 H615.7 Z" fill="#e4ecf8" stroke="#15306e" stroke-width="1.3" shape-rendering="geometricPrecision"/><path d="M623.7,72.5 A2.5,2.5 0 0 1 628.7,71.5 V73.5" fill="none" stroke="#15306e" stroke-width="1.2" shape-rendering="geometricPrecision"/><rect x="621.2" y="74.0" width="5" height="4.5" fill="#c8d8f4" stroke="#3a5cc0" stroke-width="1.2" /><path d="M621.7,84.8 H630.7 L624.7,90.8 H615.7 Z" fill="#e4ecf8" stroke="#15306e" stroke-width="1.3" shape-rendering="geometricPrecision"/><path d="M624.9000000000001,95.8 V94.3 A2,2 0 0 1 628.9000000000001,94.3 V95.8" fill="none" stroke="#7a4010" stroke-width="1.2" shape-rendering="geometricPrecision"/><rect x="623.7" y="95.8" width="6.5" height="4.5" fill="#f5c030" stroke="#9a3a10" stroke-width="1" /><path d="M648,63.5 H657 L651,69.5 H642 Z" fill="#e4ecf8" stroke="#15306e" stroke-width="1.3" shape-rendering="geometricPrecision"/><path d="M648,66.8 H657 L651,72.8 H642 Z" fill="#e4ecf8" stroke="#15306e" stroke-width="1.3" shape-rendering="geometricPrecision"/><path d="M648,70.1 H657 L651,76.1 H642 Z" fill="#f5a020" stroke="#c06a10" stroke-width="1.3" shape-rendering="geometricPrecision"/><path d="M650,78.5 L655,73.5 M652,73.5 H655 V76.5" fill="none" stroke="#15306e" stroke-width="1.1" shape-rendering="geometricPrecision"/><path d="M648,84.8 H657 L651,90.8 H642 Z" fill="#e4ecf8" stroke="#15306e" stroke-width="1.3" shape-rendering="geometricPrecision"/><path d="M648,88.1 H657 L651,94.1 H642 Z" fill="#e4ecf8" stroke="#15306e" stroke-width="1.3" shape-rendering="geometricPrecision"/><path d="M648,91.39999999999999 H657 L651,97.39999999999999 H642 Z" fill="#f5a020" stroke="#c06a10" stroke-width="1.3" shape-rendering="geometricPrecision"/><path d="M655,94.8 L650,99.8 M650,96.8 V99.8 H653" fill="none" stroke="#15306e" stroke-width="1.1" shape-rendering="geometricPrecision"/><path d="M674.2,64.5 H683.2 L677.2,70.5 H668.2 Z" fill="#f5a540" stroke="#c06a10" stroke-width="1.3" shape-rendering="geometricPrecision"/><path d="M668.7,73.7 H677.2 L683.2,67.7" fill="none" stroke="#15306e" stroke-width="1.1" shape-rendering="geometricPrecision"/><path d="M668.7,76.9 H677.2 L683.2,70.9" fill="none" stroke="#15306e" stroke-width="1.1" shape-rendering="geometricPrecision"/><circle cx="675.2" cy="66.5" r="2.8" fill="#6a9af0" stroke="#2a4aa0" stroke-width="0.8" shape-rendering="geometricPrecision"/><path d="M674.2,83.8 H683.2 L677.2,89.8 H668.2 Z" fill="#f5b060" stroke="#c06a10" stroke-width="1.3" shape-rendering="geometricPrecision"/><path d="M668.7,93.8 H676.2" fill="none" stroke="#15306e" stroke-width="1.1" shape-rendering="geometricPrecision"/><path d="M668.7,96.8 H676.2" fill="none" stroke="#15306e" stroke-width="1.1" shape-rendering="geometricPrecision"/><path d="M675.2,95.8 L677.7,98.8 L682.2,92.8" fill="none" stroke="#28a028" stroke-width="1.8" shape-rendering="geometricPrecision"/><rect x="697.8" y="63.0" width="6" height="1.8" fill="#e05a30" stroke="none" stroke-width="1" /><rect x="697.8" y="66.0" width="5" height="1.5" fill="#e05a30" stroke="none" stroke-width="1" /><path d="M700.8,66.5 H709.8 L703.8,72.5 H694.8 Z" fill="#e4ecf8" stroke="#15306e" stroke-width="1.3" shape-rendering="geometricPrecision"/><path d="M695.3,75.5 H703.8 L709.8,69.5" fill="none" stroke="#15306e" stroke-width="1.1" shape-rendering="geometricPrecision"/><path d="M695.3,78.5 H703.8 L709.8,72.5" fill="none" stroke="#15306e" stroke-width="1.1" shape-rendering="geometricPrecision"/><path d="M701.8,85.8 H710.8 L704.8,91.8 H695.8 Z" fill="#e4ecf8" stroke="#15306e" stroke-width="1.3" shape-rendering="geometricPrecision"/><path d="M701.8,89.8 H710.8 L704.8,95.8 H695.8 Z" fill="#e4ecf8" stroke="#15306e" stroke-width="1.3" shape-rendering="geometricPrecision"/><path d="M694.8,87.8 V96.8 H697.8" fill="none" stroke="#15306e" stroke-width="1.1" shape-rendering="geometricPrecision"/><circle cx="702.8" cy="87.8" r="1.8" fill="none" stroke="#15306e" stroke-width="1" shape-rendering="geometricPrecision"/><path d="M726.8,63.5 H735.8 L729.8,69.5 H720.8 Z" fill="#e4ecf8" stroke="#15306e" stroke-width="1.3" shape-rendering="geometricPrecision"/><path d="M721.3,72.0 H728.8 M722.8,70.8 L721.3,72.0 L722.8,73.2" fill="none" stroke="#15306e" stroke-width="1.1" shape-rendering="geometricPrecision"/><path d="M721.3,75.2 H728.8 M722.8,74.0 L721.3,75.2 L722.8,76.4" fill="none" stroke="#15306e" stroke-width="1.1" shape-rendering="geometricPrecision"/><rect x="721.8" y="72.0" width="7" height="1.8" fill="#f08a20" stroke="none" stroke-width="1" /><rect x="729.8" y="71.5" width="2" height="4.5" fill="#15306e" stroke="none" stroke-width="1" /><rect x="732.8" y="71.5" width="2" height="4.5" fill="#15306e" stroke="none" stroke-width="1" /><rect x="729.8" y="76.5" width="2" height="1.6" fill="#15306e" stroke="none" stroke-width="1" /><rect x="732.8" y="76.5" width="2" height="1.6" fill="#15306e" stroke="none" stroke-width="1" /><path d="M727.8,86.8 H736.8 L730.8,92.8 H721.8 Z" fill="#e4ecf8" stroke="#15306e" stroke-width="1.3" shape-rendering="geometricPrecision"/><path d="M727.8,90.1 H736.8 L730.8,96.1 H721.8 Z" fill="#e4ecf8" stroke="#15306e" stroke-width="1.3" shape-rendering="geometricPrecision"/><path d="M727.8,93.39999999999999 H736.8 L730.8,99.39999999999999 H721.8 Z" fill="#e4ecf8" stroke="#15306e" stroke-width="1.3" shape-rendering="geometricPrecision"/><path d="M722.8,83.8 H726.8 L728.8,86.8" fill="none" stroke="#15306e" stroke-width="1.1" shape-rendering="geometricPrecision"/><circle cx="569.5" cy="110.5" r="3.8" fill="#fff59a" stroke="#a8a040" stroke-width="0.9" shape-rendering="geometricPrecision"/><rect x="568" y="114.5" width="3" height="3" fill="#808080" stroke="none" stroke-width="1" /><line x1="588.40" y1="112.00" x2="590.00" y2="112.00" stroke="#222" stroke-width="1" shape-rendering="geometricPrecision"/><line x1="587.05" y1="115.25" x2="588.18" y2="116.38" stroke="#222" stroke-width="1" shape-rendering="geometricPrecision"/><line x1="583.80" y1="116.60" x2="583.80" y2="118.20" stroke="#222" stroke-width="1" shape-rendering="geometricPrecision"/><line x1="580.55" y1="115.25" x2="579.42" y2="116.38" stroke="#222" stroke-width="1" shape-rendering="geometricPrecision"/><line x1="579.20" y1="112.00" x2="577.60" y2="112.00" stroke="#222" stroke-width="1" shape-rendering="geometricPrecision"/><line x1="580.55" y1="108.75" x2="579.42" y2="107.62" stroke="#222" stroke-width="1" shape-rendering="geometricPrecision"/><line x1="583.80" y1="107.40" x2="583.80" y2="105.80" stroke="#222" stroke-width="1" shape-rendering="geometricPrecision"/><line x1="587.05" y1="108.75" x2="588.18" y2="107.62" stroke="#222" stroke-width="1" shape-rendering="geometricPrecision"/><circle cx="583.8" cy="112" r="3.4" fill="#ffe04a" stroke="#333" stroke-width="0.9" shape-rendering="geometricPrecision"/><rect x="592.5" y="111.5" width="9" height="7" fill="#a9c1ec" stroke="#1f3b8c" stroke-width="1.2" /><rect x="594.5" y="113" width="2" height="4" fill="#ffffff" stroke="none" stroke-width="1" /><rect x="598" y="113" width="2" height="4" fill="#ffffff" stroke="none" stroke-width="1" /><path d="M599,111 V107.5 A3,3 0 0 1 605,107.5 V110" fill="none" stroke="#1f3b8c" stroke-width="1.4" shape-rendering="geometricPrecision"/><path d="M802,77 L806,65 L808,77 Z" fill="#c8d4ee" stroke="#1f3b8c" stroke-width="1" shape-rendering="geometricPrecision"/><rect x="807.5" y="68.5" width="9" height="7" fill="#dfe7f6" stroke="#1f3b8c" stroke-width="1" /><line x1="809" y1="70.5" x2="815" y2="70.5" stroke="#2f5bd6" stroke-width="0.9" /><line x1="809" y1="72.5" x2="815" y2="72.5" stroke="#2f5bd6" stroke-width="0.9" /><circle cx="812.5" cy="89.5" r="3.8" fill="#fff" stroke="#1f3b8c" stroke-width="1.2" shape-rendering="geometricPrecision"/><path d="M809,91 C804,92 802,95 802,98" fill="none" stroke="#1f3b8c" stroke-width="1.2" shape-rendering="geometricPrecision"/><path d="M800,96 L803,99.5 L804.5,95 Z" fill="#1f3b8c" stroke="#1f3b8c" stroke-width="0.6" shape-rendering="geometricPrecision"/><path d="M801.5,105 V119 M816.5,105 V119 M801.5,110 H816.5" fill="none" stroke="#1f3b8c" stroke-width="1.6" shape-rendering="geometricPrecision"/><path d="M803,108 L801.5,110 L803,112 M815,108 L816.5,110 L815,112" fill="none" stroke="#1f3b8c" stroke-width="0.9" shape-rendering="geometricPrecision"/><path d="M866,68.5 H876 L882,74 V88 H866 Z" fill="#f4f7fc" stroke="#1f3b8c" stroke-width="1.2" shape-rendering="geometricPrecision"/><rect x="856.5" y="75.5" width="14" height="11" fill="#f4f7fc" stroke="#2f5bd6" stroke-width="1.3" /><path d="M857,71 H867 M864,69 L867,71 L864,73" fill="none" stroke="#2f5bd6" stroke-width="1.1" shape-rendering="geometricPrecision"/><circle cx="873.5" cy="86" r="5.5" fill="#dfe7f6" stroke="#2f5bd6" stroke-width="1.2" shape-rendering="geometricPrecision"/><rect x="855.75" y="84.25" width="2.5" height="2.5" fill="#fff" stroke="#2f5bd6" stroke-width="1.1" shape-rendering="geometricPrecision"/><path d="M892,66 L896,72 L902,66 L898,74 L893,70 Z" fill="#e8eefa" stroke="#1f3b8c" stroke-width="1" shape-rendering="geometricPrecision"/><path d="M897,74 L905,64 L907,66 L899,76 Z" fill="#f3c040" stroke="#8a5010" stroke-width="0.8" shape-rendering="geometricPrecision"/><rect x="892.5" y="86.5" width="10" height="7" fill="#f4f7fc" stroke="#1f3b8c" stroke-width="1.1" /><circle cx="902.5" cy="93.5" r="3.5" fill="none" stroke="#1f3b8c" stroke-width="1.1" shape-rendering="geometricPrecision"/><rect x="892.5" y="107.5" width="10" height="7" fill="#f4f7fc" stroke="#1f3b8c" stroke-width="1.1" /><circle cx="900.5" cy="114" r="3" fill="none" stroke="#1f3b8c" stroke-width="1.1" shape-rendering="geometricPrecision"/><path d="M904,104 L902,109 H905 L903,113" fill="none" stroke="#f0a020" stroke-width="1.3" shape-rendering="geometricPrecision"/><rect x="929.5" y="64.5" width="28.5" height="28.5" fill="#f8fafd" stroke="none" stroke-width="1" /><rect x="929.5" y="64.5" width="2.2" height="2.2" fill="#1e3370" stroke="none" stroke-width="1" /><rect x="931.7" y="64.5" width="2.2" height="2.2" fill="#1e3370" stroke="none" stroke-width="1" /><rect x="933.9" y="64.5" width="2.2" height="2.2" fill="#1e3370" stroke="none" stroke-width="1" /><rect x="936.1" y="64.5" width="2.2" height="2.2" fill="#1e3370" stroke="none" stroke-width="1" /><rect x="938.3" y="64.5" width="2.2" height="2.2" fill="#1e3370" stroke="none" stroke-width="1" /><rect x="940.5" y="64.5" width="2.2" height="2.2" fill="#1e3370" stroke="none" stroke-width="1" /><rect x="942.7" y="64.5" width="2.2" height="2.2" fill="#1e3370" stroke="none" stroke-width="1" /><rect x="947.1" y="64.5" width="2.2" height="2.2" fill="#1e3370" stroke="none" stroke-width="1" /><rect x="949.3" y="64.5" width="2.2" height="2.2" fill="#1e3370" stroke="none" stroke-width="1" /><rect x="951.5" y="64.5" width="2.2" height="2.2" fill="#1e3370" stroke="none" stroke-width="1" /><rect x="953.7" y="64.5" width="2.2" height="2.2" fill="#1e3370" stroke="none" stroke-width="1" /><rect x="955.9" y="64.5" width="2.2" height="2.2" fill="#1e3370" stroke="none" stroke-width="1" /><rect x="929.5" y="66.7" width="2.2" height="2.2" fill="#1e3370" stroke="none" stroke-width="1" /><rect x="938.3" y="66.7" width="2.2" height="2.2" fill="#1e3370" stroke="none" stroke-width="1" /><rect x="942.7" y="66.7" width="2.2" height="2.2" fill="#1e3370" stroke="none" stroke-width="1" /><rect x="947.1" y="66.7" width="2.2" height="2.2" fill="#1e3370" stroke="none" stroke-width="1" /><rect x="955.9" y="66.7" width="2.2" height="2.2" fill="#1e3370" stroke="none" stroke-width="1" /><rect x="929.5" y="68.9" width="2.2" height="2.2" fill="#1e3370" stroke="none" stroke-width="1" /><rect x="933.9" y="68.9" width="2.2" height="2.2" fill="#1e3370" stroke="none" stroke-width="1" /><rect x="938.3" y="68.9" width="2.2" height="2.2" fill="#1e3370" stroke="none" stroke-width="1" /><rect x="940.5" y="68.9" width="2.2" height="2.2" fill="#1e3370" stroke="none" stroke-width="1" /><rect x="944.9" y="68.9" width="2.2" height="2.2" fill="#1e3370" stroke="none" stroke-width="1" /><rect x="947.1" y="68.9" width="2.2" height="2.2" fill="#1e3370" stroke="none" stroke-width="1" /><rect x="951.5" y="68.9" width="2.2" height="2.2" fill="#1e3370" stroke="none" stroke-width="1" /><rect x="955.9" y="68.9" width="2.2" height="2.2" fill="#1e3370" stroke="none" stroke-width="1" /><rect x="929.5" y="71.1" width="2.2" height="2.2" fill="#1e3370" stroke="none" stroke-width="1" /><rect x="938.3" y="71.1" width="2.2" height="2.2" fill="#1e3370" stroke="none" stroke-width="1" /><rect x="940.5" y="71.1" width="2.2" height="2.2" fill="#1e3370" stroke="none" stroke-width="1" /><rect x="947.1" y="71.1" width="2.2" height="2.2" fill="#1e3370" stroke="none" stroke-width="1" /><rect x="955.9" y="71.1" width="2.2" height="2.2" fill="#1e3370" stroke="none" stroke-width="1" /><rect x="929.5" y="73.3" width="2.2" height="2.2" fill="#1e3370" stroke="none" stroke-width="1" /><rect x="931.7" y="73.3" width="2.2" height="2.2" fill="#1e3370" stroke="none" stroke-width="1" /><rect x="933.9" y="73.3" width="2.2" height="2.2" fill="#1e3370" stroke="none" stroke-width="1" /><rect x="936.1" y="73.3" width="2.2" height="2.2" fill="#1e3370" stroke="none" stroke-width="1" /><rect x="938.3" y="73.3" width="2.2" height="2.2" fill="#1e3370" stroke="none" stroke-width="1" /><rect x="947.1" y="73.3" width="2.2" height="2.2" fill="#1e3370" stroke="none" stroke-width="1" /><rect x="949.3" y="73.3" width="2.2" height="2.2" fill="#1e3370" stroke="none" stroke-width="1" /><rect x="951.5" y="73.3" width="2.2" height="2.2" fill="#1e3370" stroke="none" stroke-width="1" /><rect x="953.7" y="73.3" width="2.2" height="2.2" fill="#1e3370" stroke="none" stroke-width="1" /><rect x="955.9" y="73.3" width="2.2" height="2.2" fill="#1e3370" stroke="none" stroke-width="1" /><rect x="929.5" y="75.5" width="2.2" height="2.2" fill="#1e3370" stroke="none" stroke-width="1" /><rect x="936.1" y="75.5" width="2.2" height="2.2" fill="#1e3370" stroke="none" stroke-width="1" /><rect x="940.5" y="75.5" width="2.2" height="2.2" fill="#1e3370" stroke="none" stroke-width="1" /><rect x="951.5" y="75.5" width="2.2" height="2.2" fill="#1e3370" stroke="none" stroke-width="1" /><rect x="953.7" y="75.5" width="2.2" height="2.2" fill="#1e3370" stroke="none" stroke-width="1" /><rect x="929.5" y="77.7" width="2.2" height="2.2" fill="#1e3370" stroke="none" stroke-width="1" /><rect x="931.7" y="77.7" width="2.2" height="2.2" fill="#1e3370" stroke="none" stroke-width="1" /><rect x="933.9" y="77.7" width="2.2" height="2.2" fill="#1e3370" stroke="none" stroke-width="1" /><rect x="936.1" y="77.7" width="2.2" height="2.2" fill="#1e3370" stroke="none" stroke-width="1" /><rect x="938.3" y="77.7" width="2.2" height="2.2" fill="#1e3370" stroke="none" stroke-width="1" /><rect x="942.7" y="77.7" width="2.2" height="2.2" fill="#1e3370" stroke="none" stroke-width="1" /><rect x="944.9" y="77.7" width="2.2" height="2.2" fill="#1e3370" stroke="none" stroke-width="1" /><rect x="947.1" y="77.7" width="2.2" height="2.2" fill="#1e3370" stroke="none" stroke-width="1" /><rect x="951.5" y="77.7" width="2.2" height="2.2" fill="#1e3370" stroke="none" stroke-width="1" /><rect x="953.7" y="77.7" width="2.2" height="2.2" fill="#1e3370" stroke="none" stroke-width="1" /><rect x="936.1" y="79.9" width="2.2" height="2.2" fill="#1e3370" stroke="none" stroke-width="1" /><rect x="938.3" y="79.9" width="2.2" height="2.2" fill="#1e3370" stroke="none" stroke-width="1" /><rect x="940.5" y="79.9" width="2.2" height="2.2" fill="#1e3370" stroke="none" stroke-width="1" /><rect x="947.1" y="79.9" width="2.2" height="2.2" fill="#1e3370" stroke="none" stroke-width="1" /><rect x="949.3" y="79.9" width="2.2" height="2.2" fill="#1e3370" stroke="none" stroke-width="1" /><rect x="951.5" y="79.9" width="2.2" height="2.2" fill="#1e3370" stroke="none" stroke-width="1" /><rect x="953.7" y="79.9" width="2.2" height="2.2" fill="#1e3370" stroke="none" stroke-width="1" /><rect x="955.9" y="79.9" width="2.2" height="2.2" fill="#1e3370" stroke="none" stroke-width="1" /><rect x="929.5" y="82.1" width="2.2" height="2.2" fill="#1e3370" stroke="none" stroke-width="1" /><rect x="931.7" y="82.1" width="2.2" height="2.2" fill="#1e3370" stroke="none" stroke-width="1" /><rect x="933.9" y="82.1" width="2.2" height="2.2" fill="#1e3370" stroke="none" stroke-width="1" /><rect x="936.1" y="82.1" width="2.2" height="2.2" fill="#1e3370" stroke="none" stroke-width="1" /><rect x="938.3" y="82.1" width="2.2" height="2.2" fill="#1e3370" stroke="none" stroke-width="1" /><rect x="953.7" y="82.1" width="2.2" height="2.2" fill="#1e3370" stroke="none" stroke-width="1" /><rect x="929.5" y="84.3" width="2.2" height="2.2" fill="#1e3370" stroke="none" stroke-width="1" /><rect x="938.3" y="84.3" width="2.2" height="2.2" fill="#1e3370" stroke="none" stroke-width="1" /><rect x="940.5" y="84.3" width="2.2" height="2.2" fill="#1e3370" stroke="none" stroke-width="1" /><rect x="944.9" y="84.3" width="2.2" height="2.2" fill="#1e3370" stroke="none" stroke-width="1" /><rect x="947.1" y="84.3" width="2.2" height="2.2" fill="#1e3370" stroke="none" stroke-width="1" /><rect x="949.3" y="84.3" width="2.2" height="2.2" fill="#1e3370" stroke="none" stroke-width="1" /><rect x="951.5" y="84.3" width="2.2" height="2.2" fill="#1e3370" stroke="none" stroke-width="1" /><rect x="953.7" y="84.3" width="2.2" height="2.2" fill="#1e3370" stroke="none" stroke-width="1" /><rect x="955.9" y="84.3" width="2.2" height="2.2" fill="#1e3370" stroke="none" stroke-width="1" /><rect x="929.5" y="86.5" width="2.2" height="2.2" fill="#1e3370" stroke="none" stroke-width="1" /><rect x="933.9" y="86.5" width="2.2" height="2.2" fill="#1e3370" stroke="none" stroke-width="1" /><rect x="938.3" y="86.5" width="2.2" height="2.2" fill="#1e3370" stroke="none" stroke-width="1" /><rect x="944.9" y="86.5" width="2.2" height="2.2" fill="#1e3370" stroke="none" stroke-width="1" /><rect x="947.1" y="86.5" width="2.2" height="2.2" fill="#1e3370" stroke="none" stroke-width="1" /><rect x="949.3" y="86.5" width="2.2" height="2.2" fill="#1e3370" stroke="none" stroke-width="1" /><rect x="951.5" y="86.5" width="2.2" height="2.2" fill="#1e3370" stroke="none" stroke-width="1" /><rect x="953.7" y="86.5" width="2.2" height="2.2" fill="#1e3370" stroke="none" stroke-width="1" /><rect x="929.5" y="88.7" width="2.2" height="2.2" fill="#1e3370" stroke="none" stroke-width="1" /><rect x="938.3" y="88.7" width="2.2" height="2.2" fill="#1e3370" stroke="none" stroke-width="1" /><rect x="940.5" y="88.7" width="2.2" height="2.2" fill="#1e3370" stroke="none" stroke-width="1" /><rect x="942.7" y="88.7" width="2.2" height="2.2" fill="#1e3370" stroke="none" stroke-width="1" /><rect x="947.1" y="88.7" width="2.2" height="2.2" fill="#1e3370" stroke="none" stroke-width="1" /><rect x="949.3" y="88.7" width="2.2" height="2.2" fill="#1e3370" stroke="none" stroke-width="1" /><rect x="955.9" y="88.7" width="2.2" height="2.2" fill="#1e3370" stroke="none" stroke-width="1" /><rect x="929.5" y="90.9" width="2.2" height="2.2" fill="#1e3370" stroke="none" stroke-width="1" /><rect x="931.7" y="90.9" width="2.2" height="2.2" fill="#1e3370" stroke="none" stroke-width="1" /><rect x="933.9" y="90.9" width="2.2" height="2.2" fill="#1e3370" stroke="none" stroke-width="1" /><rect x="936.1" y="90.9" width="2.2" height="2.2" fill="#1e3370" stroke="none" stroke-width="1" /><rect x="938.3" y="90.9" width="2.2" height="2.2" fill="#1e3370" stroke="none" stroke-width="1" /><rect x="942.7" y="90.9" width="2.2" height="2.2" fill="#1e3370" stroke="none" stroke-width="1" /><rect x="944.9" y="90.9" width="2.2" height="2.2" fill="#1e3370" stroke="none" stroke-width="1" /><rect x="947.1" y="90.9" width="2.2" height="2.2" fill="#1e3370" stroke="none" stroke-width="1" /><rect x="955.9" y="90.9" width="2.2" height="2.2" fill="#1e3370" stroke="none" stroke-width="1" /><path d="M987.5,84 L999,72.5 L1008.5,82 L997,93.5 Z" fill="#6a90e2" stroke="#3a5cb8" stroke-width="0.9" shape-rendering="geometricPrecision"/><path d="M989.5,86 L999.0,76.5" fill="none" stroke="#dfe8fa" stroke-width="0.7" shape-rendering="geometricPrecision"/><path d="M991.5,88 L1001.2,78.7" fill="none" stroke="#dfe8fa" stroke-width="0.7" shape-rendering="geometricPrecision"/><path d="M993.5,90 L1003.4,80.9" fill="none" stroke="#dfe8fa" stroke-width="0.7" shape-rendering="geometricPrecision"/><path d="M995.5,92 L1005.6,83.1" fill="none" stroke="#dfe8fa" stroke-width="0.7" shape-rendering="geometricPrecision"/><path d="M999,72.5 L1004,67.5 L1013.5,77 L1008.5,82 Z" fill="#c4c9d2" stroke="#7b8494" stroke-width="0.9" shape-rendering="geometricPrecision"/><path d="M1004,67.5 L1008,66.5 L1013,61 Q1015.5,60.5 1016.5,63 L1012.5,70 L1013.5,77 Z" fill="#f2a53a" stroke="#c47a18" stroke-width="0.9" shape-rendering="geometricPrecision"/><rect x="1031" y="63" width="15" height="1.5" fill="#6a7ea8" stroke="none" stroke-width="1" /><rect x="1031" y="66.5" width="15" height="2" fill="#1a2f6a" stroke="none" stroke-width="1" /><rect x="1031" y="70.5" width="15" height="2.5" fill="#1a2f6a" stroke="none" stroke-width="1" /><rect x="1031" y="75" width="15" height="3" fill="#1a2f6a" stroke="none" stroke-width="1" /><line x1="1031" y1="85.5" x2="1046" y2="85.5" stroke="#1a2f6a" stroke-width="1" stroke-dasharray="1,1"/><line x1="1031" y1="88.5" x2="1046" y2="88.5" stroke="#1a2f6a" stroke-width="1.2" stroke-dasharray="2,1"/><line x1="1031" y1="91.5" x2="1046" y2="91.5" stroke="#1a2f6a" stroke-width="1.2" /><line x1="1031" y1="94.5" x2="1046" y2="94.5" stroke="#1a2f6a" stroke-width="1.2" stroke-dasharray="1,1,3,1"/><line x1="1031" y1="97" x2="1046" y2="97" stroke="#1a2f6a" stroke-width="1.2" stroke-dasharray="2,1,3,1"/><path d="M1038.9,112.5 L1045.90,112.50 A7,7 0 0 1 1043.26,117.97 Z" fill="#ff3030" shape-rendering="geometricPrecision"/><path d="M1038.9,112.5 L1043.26,117.97 A7,7 0 0 1 1037.34,119.32 Z" fill="#ffa020" shape-rendering="geometricPrecision"/><path d="M1038.9,112.5 L1037.34,119.32 A7,7 0 0 1 1032.59,115.54 Z" fill="#f0e020" shape-rendering="geometricPrecision"/><path d="M1038.9,112.5 L1032.59,115.54 A7,7 0 0 1 1032.59,109.46 Z" fill="#40c040" shape-rendering="geometricPrecision"/><path d="M1038.9,112.5 L1032.59,109.46 A7,7 0 0 1 1037.34,105.68 Z" fill="#2090f0" shape-rendering="geometricPrecision"/><path d="M1038.9,112.5 L1037.34,105.68 A7,7 0 0 1 1043.26,107.03 Z" fill="#8040e0" shape-rendering="geometricPrecision"/><path d="M1038.9,112.5 L1043.26,107.03 A7,7 0 0 1 1045.90,112.50 Z" fill="#e040a0" shape-rendering="geometricPrecision"/><rect x="1232.5" y="66.5" width="4" height="4" fill="#fff" stroke="#1f3b8c" stroke-width="1.1" /><rect x="1258.5" y="66.5" width="4" height="4" fill="#fff" stroke="#1f3b8c" stroke-width="1.1" /><line x1="1237" y1="68.5" x2="1258" y2="68.5" stroke="#1f3b8c" stroke-width="1.3" stroke-dasharray="2.5,1.5"/><line x1="1232" y1="79.5" x2="1262" y2="79.5" stroke="#c8602a" stroke-width="1" /><line x1="1233.5" y1="79.5" x2="1233.5" y2="81.5" stroke="#c8602a" stroke-width="0.8" /><line x1="1236.5" y1="79.5" x2="1236.5" y2="82.5" stroke="#c8602a" stroke-width="0.8" /><line x1="1239.5" y1="79.5" x2="1239.5" y2="81.5" stroke="#c8602a" stroke-width="0.8" /><line x1="1242.5" y1="79.5" x2="1242.5" y2="82.5" stroke="#c8602a" stroke-width="0.8" /><line x1="1245.5" y1="79.5" x2="1245.5" y2="81.5" stroke="#c8602a" stroke-width="0.8" /><line x1="1248.5" y1="79.5" x2="1248.5" y2="82.5" stroke="#c8602a" stroke-width="0.8" /><line x1="1251.5" y1="79.5" x2="1251.5" y2="81.5" stroke="#c8602a" stroke-width="0.8" /><line x1="1254.5" y1="79.5" x2="1254.5" y2="82.5" stroke="#c8602a" stroke-width="0.8" /><line x1="1257.5" y1="79.5" x2="1257.5" y2="81.5" stroke="#c8602a" stroke-width="0.8" /><line x1="1260.5" y1="79.5" x2="1260.5" y2="82.5" stroke="#c8602a" stroke-width="0.8" /><line x1="1232" y1="86.5" x2="1262" y2="86.5" stroke="#2f5bd6" stroke-width="1.2" /><path d="M1274,64 V77 H1287 M1274,77 L1284,70 M1285,75 L1287,77 L1285,79" fill="none" stroke="#1f3b8c" stroke-width="1.1" shape-rendering="geometricPrecision"/><rect x="1273.5" y="84.5" width="13" height="14" fill="#dfe7f6" stroke="#1f3b8c" stroke-width="1.3" /><rect x="1275" y="86" width="10" height="2.5" fill="#2f5bd6" stroke="none" stroke-width="1" /><rect x="1276" y="90.5" width="2" height="1.6" fill="#2f5bd6" stroke="none" stroke-width="1" /><rect x="1279" y="90.5" width="2" height="1.6" fill="#2f5bd6" stroke="none" stroke-width="1" /><rect x="1282" y="90.5" width="2" height="1.6" fill="#2f5bd6" stroke="none" stroke-width="1" /><rect x="1276" y="93" width="2" height="1.6" fill="#2f5bd6" stroke="none" stroke-width="1" /><rect x="1279" y="93" width="2" height="1.6" fill="#2f5bd6" stroke="none" stroke-width="1" /><rect x="1282" y="93" width="2" height="1.6" fill="#2f5bd6" stroke="none" stroke-width="1" /><rect x="1276" y="95.5" width="2" height="1.6" fill="#2f5bd6" stroke="none" stroke-width="1" /><rect x="1279" y="95.5" width="2" height="1.6" fill="#2f5bd6" stroke="none" stroke-width="1" /><rect x="1282" y="95.5" width="2" height="1.6" fill="#2f5bd6" stroke="none" stroke-width="1" /><rect x="1272.5" y="106.5" width="9" height="10" fill="#fff" stroke="#1f3b8c" stroke-width="1.2" /><path d="M1277,109 L1283,118 L1280,118 L1282,121 L1280,122 L1278,119 L1276,121 Z" fill="#1f3b8c" stroke="#1f3b8c" stroke-width="0.5" shape-rendering="geometricPrecision"/><path d="M1286,103 L1283,108 H1286 L1284,112" fill="none" stroke="#f0a020" stroke-width="1.2" shape-rendering="geometricPrecision"/><path d="M1299,64 V75 M1299,64 H1310" fill="none" stroke="#1f3b8c" stroke-width="1.1" shape-rendering="geometricPrecision"/><path d="M1302,75 L1310,66 L1312,68 L1304,77 Z" fill="#f0a030" stroke="#8a5010" stroke-width="0.8" shape-rendering="geometricPrecision"/><rect x="1300.5" y="86.5" width="11" height="11" fill="none" stroke="#1f3b8c" stroke-width="1.2" /><rect x="1303.5" y="89.5" width="8" height="8" fill="none" stroke="#1f3b8c" stroke-width="1.1" /><rect x="1297.75" y="83.75" width="2.5" height="2.5" fill="#fff" stroke="#1f3b8c" stroke-width="1.1" shape-rendering="geometricPrecision"/><rect x="1310.75" y="83.75" width="2.5" height="2.5" fill="#fff" stroke="#1f3b8c" stroke-width="1.1" shape-rendering="geometricPrecision"/><rect x="1297.75" y="96.75" width="2.5" height="2.5" fill="#fff" stroke="#1f3b8c" stroke-width="1.1" shape-rendering="geometricPrecision"/><rect x="1310.75" y="96.75" width="2.5" height="2.5" fill="#fff" stroke="#1f3b8c" stroke-width="1.1" shape-rendering="geometricPrecision"/><rect x="1298.5" y="106.5" width="12" height="12" fill="none" stroke="#1f3b8c" stroke-width="1" stroke-dasharray="1.5,1.5"/><path d="M1305,110 L1312,119 L1309,119 L1311,122 L1309,123 L1307,120 L1305,122 Z" fill="#1f3b8c" stroke="#1f3b8c" stroke-width="0.5" shape-rendering="geometricPrecision"/><path d="M1337.5,67.5 H1344 L1346,65 H1350 L1352,67.5 H1357 V90 H1337.5 Z" fill="#f4f7fc" stroke="#1f3b8c" stroke-width="1.2" shape-rendering="geometricPrecision"/><path d="M1346,73.5 H1355 L1361.5,80 V93.5 H1346 Z" fill="#f4f7fc" stroke="#2f5bd6" stroke-width="1.3" shape-rendering="geometricPrecision"/><path d="M1355,73.5 V80 H1361.5" fill="none" stroke="#2f5bd6" stroke-width="1" shape-rendering="geometricPrecision"/><path d="M1375,67 H1383 L1387,71 V78 H1375 Z" fill="#eef2fa" stroke="#1f3b8c" stroke-width="1.2" shape-rendering="geometricPrecision"/><path d="M1378,72.5 H1384 M1382,70 L1385,72.5 L1382,75" fill="none" stroke="#2f5bd6" stroke-width="1.2" shape-rendering="geometricPrecision"/><circle cx="1377.5" cy="95.5" r="2.5" fill="none" stroke="#2f5bd6" stroke-width="1.4" shape-rendering="geometricPrecision"/><circle cx="1386.5" cy="95.5" r="2.5" fill="none" stroke="#2f5bd6" stroke-width="1.4" shape-rendering="geometricPrecision"/><path d="M1379,93.5 L1386,85.5 M1385,93.5 L1378,85.5" fill="none" stroke="#666" stroke-width="1.3" shape-rendering="geometricPrecision"/><path d="M1375.5,105 H1381 L1383,107 V116 H1375.5 Z" fill="#f4f7fc" stroke="#1f3b8c" stroke-width="1.1" shape-rendering="geometricPrecision"/><path d="M1378.5,109 H1384 L1388,113 V120 H1378.5 Z" fill="#f4f7fc" stroke="#1f3b8c" stroke-width="1.1" shape-rendering="geometricPrecision"/><path d="M11.5,165.5 L16,150 Q17,148.5 19,148.5 H112 L118,165.5 Z" fill="url(#gYel)" stroke="#d9c27a" stroke-width="1" shape-rendering="geometricPrecision"/><text x="21.7" y="160.8" font-size="11.5" fill="#1b1b1b" font-family="&quot;Liberation Sans&quot;, sans-serif" font-weight="bold" textLength="70.8" lengthAdjust="spacingAndGlyphs" >EP_USL_1.dwg</text><rect x="105" y="153" width="10.5" height="9.5" fill="#d24a4a" stroke="none" stroke-width="1" /><path d="M107.5,155.5 L113,160.5 M113,155.5 L107.5,160.5" fill="none" stroke="#fff" stroke-width="1.3" shape-rendering="geometricPrecision"/><path d="M117,165.5 L122,150 Q123,148.5 125,148.5 H189 L195.5,165.5" fill="#f3f6fa" stroke="#b8c4d4" stroke-width="1" shape-rendering="geometricPrecision"/><text x="121.0" y="160.8" font-size="11.5" fill="#1b1b1b" font-family="&quot;Liberation Sans&quot;, sans-serif" textLength="68.5" lengthAdjust="spacingAndGlyphs" stroke="#1b1b1b" stroke-width="0.35">EP_USL_0.dwg</text><path d="M196.5,165.5 L201,150 Q202,148.5 204,148.5 H273 L281,165.5" fill="#f3f6fa" stroke="#b8c4d4" stroke-width="1" shape-rendering="geometricPrecision"/><text x="202.4" y="160.8" font-size="11.5" fill="#1b1b1b" font-family="&quot;Liberation Sans&quot;, sans-serif" textLength="68.3" lengthAdjust="spacingAndGlyphs" stroke="#1b1b1b" stroke-width="0.35">EP_USL_2.dwg</text><path d="M1487.5,153.5 H1497.5 L1492.5,159 Z" fill="#111" stroke="none" stroke-width="1" /><clipPath id="cpPlan"><rect x="11" y="166" width="1491" height="639"/></clipPath><g clip-path="url(#cpPlan)"><polygon points="223.5,160.5 366.5,160.5 366.5,539.5 299.5,539.5 299.5,388.5 223.5,388.5" fill="#808080" stroke="#ff0a3c" stroke-width="1" /><polygon points="223.5,393.5 295.5,393.5 295.5,539.5 223.5,539.5" fill="#808080" stroke="#ff0a3c" stroke-width="1" /><polygon points="370.5,160.5 513.5,160.5 513.5,388.5 438.5,388.5 438.5,539.5 370.5,539.5" fill="#808080" stroke="#ff0a3c" stroke-width="1" /><polygon points="442.5,393.5 513.5,393.5 513.5,539.5 442.5,539.5" fill="#808080" stroke="#ff0a3c" stroke-width="1" /><polygon points="517.5,160.5 660.5,160.5 660.5,388.5 589.5,388.5 589.5,539.5 517.5,539.5" fill="#808080" stroke="#ff0a3c" stroke-width="1" /><polygon points="593.5,393.5 660.5,393.5 660.5,539.5 593.5,539.5" fill="#808080" stroke="#ff0a3c" stroke-width="1" /><polygon points="5.5,377.5 57.5,377.5 57.5,512.5 5.5,512.5" fill="#808080" stroke="#ff0a3c" stroke-width="1" /><polygon points="61.5,377.5 188.5,377.5 188.5,578.5 61.5,578.5" fill="#808080" stroke="#ff0a3c" stroke-width="1" /><polygon points="5.5,516.5 57.5,516.5 57.5,578.5 5.5,578.5" fill="#808080" stroke="#ff0a3c" stroke-width="1" /><polygon points="5.5,587.5 228.5,587.5 228.5,579.5 223.5,579.5 223.5,544.5 589.5,544.5 589.5,587.5 1102.5,587.5 1102.5,658.5 486.5,658.5 423.5,721.5 423.5,810.5 352.5,810.5 352.5,720.5 290.5,658.5 5.5,658.5" fill="#808080" stroke="#ff0a3c" stroke-width="1" /><polygon points="593.5,544.5 660.5,544.5 660.5,583.5 593.5,583.5" fill="#808080" stroke="#ff0a3c" stroke-width="1" /><polygon points="665.5,375.5 910.5,375.5 910.5,436.5 861.5,436.5 861.5,579.5 665.5,579.5" fill="#808080" stroke="#ff0a3c" stroke-width="1" /><polygon points="865.5,440.5 910.5,440.5 910.5,579.5 865.5,579.5" fill="#808080" stroke="#ff0a3c" stroke-width="1" /><polygon points="915.5,375.5 1102.5,375.5 1102.5,507.5 1049.5,507.5 1049.5,490.5 915.5,490.5" fill="#808080" stroke="#ff0a3c" stroke-width="1" /><polygon points="915.5,494.5 1045.5,494.5 1045.5,579.5 915.5,579.5" fill="#808080" stroke="#ff0a3c" stroke-width="1" /><polygon points="1049.5,512.5 1102.5,512.5 1102.5,579.5 1049.5,579.5" fill="#808080" stroke="#ff0a3c" stroke-width="1" /><polygon points="1116.5,375.5 1296.5,375.5 1296.5,810.5 1116.5,810.5" fill="#00bfff" stroke="#ff0a3c" stroke-width="1" /><polygon points="5.5,666.5 199.5,666.5 199.5,810.5 5.5,810.5" fill="#808080" stroke="#ff0a3c" stroke-width="1" /><polygon points="223.5,663.5 289.5,663.5 347.5,721.5 347.5,797.5 223.5,797.5" fill="#808080" stroke="#ff0a3c" stroke-width="1" /><polygon points="223.5,802.5 347.5,802.5 347.5,810.5 223.5,810.5" fill="#00bfff" stroke="#ff0a3c" stroke-width="1" /><polygon points="486.5,663.5 687.5,663.5 687.5,810.5 575.5,810.5 575.5,772.5 427.5,772.5 427.5,720.5" fill="#7fa600" stroke="#ff0a3c" stroke-width="1" /><polygon points="428.5,776.5 572.5,776.5 572.5,810.5 428.5,810.5" fill="#808080" stroke="#ff0a3c" stroke-width="1" /><polygon points="691.5,663.5 906.5,663.5 906.5,810.5 691.5,810.5" fill="#7fa600" stroke="#ff0a3c" stroke-width="1" /><polygon points="910.5,663.5 1102.5,663.5 1102.5,810.5 910.5,810.5" fill="#808080" stroke="#ff0a3c" stroke-width="1" /><rect x="188" y="588" width="3" height="70" fill="#d6d6d6" stroke="none" stroke-width="1" /><line x1="188.5" y1="588" x2="188.5" y2="658" stroke="#ff0a3c" stroke-width="1" /><line x1="190.5" y1="588" x2="190.5" y2="658" stroke="#ff0a3c" stroke-width="1" /><path d="M210.5,160 V360.5 H5 M216.5,360.5 V578.5 M210.5,360.5 H216.5" fill="none" stroke="#111" stroke-width="1" /><path d="M673.5,160 V360.5 H1309.5 V564.5 H1394.5 V698.5 H1368.5 V810" fill="none" stroke="#111" stroke-width="1" /><path d="M216.5,658 V810" fill="none" stroke="#111" stroke-width="1" /><path d="M216.5,544.5 V578.5 H299.5 V544.5" fill="none" stroke="#111" stroke-width="1" /><line x1="1309.5" y1="705.5" x2="1368.5" y2="705.5" stroke="#111" stroke-width="1" /><line x1="1309.5" y1="718.5" x2="1368.5" y2="718.5" stroke="#111" stroke-width="1" /><line x1="1309.5" y1="732.5" x2="1368.5" y2="732.5" stroke="#111" stroke-width="1" /><line x1="1309.5" y1="745.5" x2="1368.5" y2="745.5" stroke="#111" stroke-width="1" /><line x1="1309.5" y1="759" x2="1368.5" y2="759" stroke="#111" stroke-width="1" /><line x1="1309.5" y1="772" x2="1368.5" y2="772" stroke="#111" stroke-width="1" /><line x1="1309.5" y1="785.5" x2="1368.5" y2="785.5" stroke="#111" stroke-width="1" /><line x1="1309.5" y1="799.5" x2="1368.5" y2="799.5" stroke="#111" stroke-width="1" /><line x1="1309.5" y1="705" x2="1309.5" y2="810" stroke="#111" stroke-width="1" /><line x1="1339.5" y1="712" x2="1339.5" y2="810" stroke="#111" stroke-width="1" /><polygon points="1339.5,706 1336.5,717 1342.5,717" fill="#f0f0f0" stroke="#111" stroke-width="1" shape-rendering="geometricPrecision"/><polyline points="1297,596.5 1350.5,596.5 1346,616 1331,630 1309.7,636.4 1332.4,658.5 1297,658.5" fill="none" stroke="#8a8a8a" stroke-width="1" shape-rendering="geometricPrecision"/><line x1="1492.5" y1="687" x2="1492.5" y2="777" stroke="#111" stroke-width="1" /><line x1="1447" y1="731.5" x2="1501" y2="731.5" stroke="#111" stroke-width="1" /><rect x="1489.5" y="728.5" width="6" height="6" fill="none" stroke="#111" stroke-width="1" /><text x="229.5" y="339.4" font-size="20" fill="#000" font-family="&quot;Liberation Sans&quot;, sans-serif" textLength="130" lengthAdjust="spacingAndGlyphs" >CHAMBRE 104</text><text x="373.3" y="339.4" font-size="20" fill="#000" font-family="&quot;Liberation Sans&quot;, sans-serif" textLength="135.0" lengthAdjust="spacingAndGlyphs" >CHAMBRE  103</text><text x="523.1" y="339.4" font-size="20" fill="#000" font-family="&quot;Liberation Sans&quot;, sans-serif" textLength="130.7" lengthAdjust="spacingAndGlyphs" >CHAMBRE 102</text><text x="264.2" y="375.9" font-size="20" fill="#000" font-family="&quot;Liberation Sans&quot;, sans-serif" textLength="47.0" lengthAdjust="spacingAndGlyphs" >21.05</text><text x="316.3" y="375.9" font-size="13.5" fill="#000" font-family="&quot;Liberation Sans&quot;, sans-serif" textLength="17.2" lengthAdjust="spacingAndGlyphs" >m2</text><text x="410.8" y="375.9" font-size="20" fill="#000" font-family="&quot;Liberation Sans&quot;, sans-serif" textLength="47.4" lengthAdjust="spacingAndGlyphs" >21.07</text><text x="463.5" y="375.9" font-size="13.5" fill="#000" font-family="&quot;Liberation Sans&quot;, sans-serif" textLength="18" lengthAdjust="spacingAndGlyphs" >m2</text><text x="558.9" y="375.9" font-size="20" fill="#000" font-family="&quot;Liberation Sans&quot;, sans-serif" textLength="47.6" lengthAdjust="spacingAndGlyphs" >21.43</text><text x="610.5" y="375.9" font-size="13.5" fill="#000" font-family="&quot;Liberation Sans&quot;, sans-serif" textLength="18" lengthAdjust="spacingAndGlyphs" >m2</text><text x="251.9" y="449" font-size="20" fill="#000" font-family="&quot;Liberation Sans&quot;, sans-serif" textLength="13.9" lengthAdjust="spacingAndGlyphs" >--</text><text x="238.7" y="489.7" font-size="20" fill="#000" font-family="&quot;Liberation Sans&quot;, sans-serif" textLength="37.1" lengthAdjust="spacingAndGlyphs" >5.28</text><text x="279.5" y="489.7" font-size="13.5" fill="#000" font-family="&quot;Liberation Sans&quot;, sans-serif" textLength="18" lengthAdjust="spacingAndGlyphs" >m2</text><text x="470.1" y="449" font-size="20" fill="#000" font-family="&quot;Liberation Sans&quot;, sans-serif" textLength="14.2" lengthAdjust="spacingAndGlyphs" >--</text><text x="457.2" y="489.7" font-size="20" fill="#000" font-family="&quot;Liberation Sans&quot;, sans-serif" textLength="36.8" lengthAdjust="spacingAndGlyphs" >5.28</text><text x="499.1" y="489.7" font-size="13.5" fill="#000" font-family="&quot;Liberation Sans&quot;, sans-serif" textLength="18.0" lengthAdjust="spacingAndGlyphs" >m2</text><text x="620.5" y="449" font-size="20" fill="#000" font-family="&quot;Liberation Sans&quot;, sans-serif" textLength="14" lengthAdjust="spacingAndGlyphs" >--</text><text x="606.7" y="489.7" font-size="20" fill="#000" font-family="&quot;Liberation Sans&quot;, sans-serif" textLength="37.1" lengthAdjust="spacingAndGlyphs" >4.95</text><text x="648.5" y="489.7" font-size="13.5" fill="#000" font-family="&quot;Liberation Sans&quot;, sans-serif" textLength="18" lengthAdjust="spacingAndGlyphs" >m2</text><text x="619.5" y="546.5" font-size="20" fill="#000" font-family="&quot;Liberation Sans&quot;, sans-serif" textLength="14" lengthAdjust="spacingAndGlyphs" >--</text><text x="607.5" y="586" font-size="20" fill="#000" font-family="&quot;Liberation Sans&quot;, sans-serif" textLength="36.9" lengthAdjust="spacingAndGlyphs" >1.30</text><text x="648.5" y="586" font-size="13.5" fill="#000" font-family="&quot;Liberation Sans&quot;, sans-serif" textLength="18" lengthAdjust="spacingAndGlyphs" >m2</text><text x="10.5" y="449.6" font-size="20" fill="#000" font-family="&quot;Liberation Sans&quot;, sans-serif" textLength="18.9" lengthAdjust="spacingAndGlyphs" >05</text><text x="25.3" y="465" font-size="20" fill="#000" font-family="&quot;Liberation Sans&quot;, sans-serif" textLength="197.0" lengthAdjust="spacingAndGlyphs" >BUREAU ANIMATRICE</text><text x="95.8" y="500.7" font-size="20" fill="#000" font-family="&quot;Liberation Sans&quot;, sans-serif" textLength="46.5" lengthAdjust="spacingAndGlyphs" >12.85</text><text x="146.5" y="500.7" font-size="13.5" fill="#000" font-family="&quot;Liberation Sans&quot;, sans-serif" textLength="17.4" lengthAdjust="spacingAndGlyphs" >m2</text><text x="86.5" y="507.5" font-size="5.5" fill="#000" font-family="&quot;Liberation Sans&quot;, sans-serif" font-weight="bold" textLength="67" lengthAdjust="spacingAndGlyphs" >(MMMM MMMM MMMM MMMM)</text><text x="19.7" y="530.1" font-size="20" fill="#000" font-family="&quot;Liberation Sans&quot;, sans-serif" textLength="13.1" lengthAdjust="spacingAndGlyphs" >--</text><text x="4.5" y="569.8" font-size="20" fill="#000" font-family="&quot;Liberation Sans&quot;, sans-serif" textLength="38" lengthAdjust="spacingAndGlyphs" >1.96</text><text x="47.8" y="569.8" font-size="13.5" fill="#000" font-family="&quot;Liberation Sans&quot;, sans-serif" textLength="17.3" lengthAdjust="spacingAndGlyphs" >m2</text><text x="697.5" y="464.5" font-size="20" fill="#000" font-family="&quot;Liberation Sans&quot;, sans-serif" textLength="129" lengthAdjust="spacingAndGlyphs" >CHAMBRE 101</text><text x="732.5" y="500.3" font-size="20" fill="#000" font-family="&quot;Liberation Sans&quot;, sans-serif" textLength="47.4" lengthAdjust="spacingAndGlyphs" >21.73</text><text x="784.5" y="500.3" font-size="13.5" fill="#000" font-family="&quot;Liberation Sans&quot;, sans-serif" textLength="19" lengthAdjust="spacingAndGlyphs" >m2</text><text x="914.5" y="428.2" font-size="20" fill="#000" font-family="&quot;Liberation Sans&quot;, sans-serif" textLength="188" lengthAdjust="spacingAndGlyphs" >OFFICE PERSONNEL</text><text x="979.4" y="464.5" font-size="20" fill="#000" font-family="&quot;Liberation Sans&quot;, sans-serif" textLength="45.7" lengthAdjust="spacingAndGlyphs" >11.36</text><text x="1029.5" y="464.5" font-size="13.5" fill="#000" font-family="&quot;Liberation Sans&quot;, sans-serif" textLength="19" lengthAdjust="spacingAndGlyphs" >m2</text><text x="881.5" y="493.5" font-size="20" fill="#000" font-family="&quot;Liberation Sans&quot;, sans-serif" textLength="13.8" lengthAdjust="spacingAndGlyphs" >--</text><text x="868.5" y="533.3" font-size="20" fill="#000" font-family="&quot;Liberation Sans&quot;, sans-serif" textLength="36.9" lengthAdjust="spacingAndGlyphs" >3.10</text><text x="909.5" y="533.3" font-size="13.5" fill="#000" font-family="&quot;Liberation Sans&quot;, sans-serif" textLength="18" lengthAdjust="spacingAndGlyphs" >m2</text><text x="973.1" y="519.8" font-size="20" fill="#000" font-family="&quot;Liberation Sans&quot;, sans-serif" textLength="13.9" lengthAdjust="spacingAndGlyphs" >--</text><text x="959.5" y="560.5" font-size="20" fill="#000" font-family="&quot;Liberation Sans&quot;, sans-serif" textLength="36" lengthAdjust="spacingAndGlyphs" >5.51</text><text x="1000.5" y="560.5" font-size="13.5" fill="#000" font-family="&quot;Liberation Sans&quot;, sans-serif" textLength="18" lengthAdjust="spacingAndGlyphs" >m2</text><text x="1069.0" y="529.3" font-size="20" fill="#000" font-family="&quot;Liberation Sans&quot;, sans-serif" textLength="14.0" lengthAdjust="spacingAndGlyphs" >--</text><text x="1056.1" y="569" font-size="20" fill="#000" font-family="&quot;Liberation Sans&quot;, sans-serif" textLength="36.8" lengthAdjust="spacingAndGlyphs" >1.80</text><text x="1096.5" y="569" font-size="13.5" fill="#000" font-family="&quot;Liberation Sans&quot;, sans-serif" textLength="18" lengthAdjust="spacingAndGlyphs" >m2</text><text x="1167.7" y="609.1" font-size="20" fill="#000" font-family="&quot;Liberation Sans&quot;, sans-serif" textLength="75.8" lengthAdjust="spacingAndGlyphs" >SEJOUR</text><text x="1175.3" y="646.4" font-size="20" fill="#000" font-family="&quot;Liberation Sans&quot;, sans-serif" textLength="47.0" lengthAdjust="spacingAndGlyphs" >45.04</text><text x="1227.5" y="646.4" font-size="13.5" fill="#000" font-family="&quot;Liberation Sans&quot;, sans-serif" textLength="18" lengthAdjust="spacingAndGlyphs" >m2</text><text x="252.7" y="717.7" font-size="20" fill="#000" font-family="&quot;Liberation Sans&quot;, sans-serif" textLength="64.8" lengthAdjust="spacingAndGlyphs" >STOCK</text><text x="265.4" y="754.4" font-size="20" fill="#000" font-family="&quot;Liberation Sans&quot;, sans-serif" textLength="37.0" lengthAdjust="spacingAndGlyphs" >7.48</text><text x="307.5" y="754.4" font-size="13.5" fill="#000" font-family="&quot;Liberation Sans&quot;, sans-serif" textLength="18" lengthAdjust="spacingAndGlyphs" >m2</text><text x="432.9" y="754.2" font-size="20" fill="#000" font-family="&quot;Liberation Sans&quot;, sans-serif" textLength="249.0" lengthAdjust="spacingAndGlyphs" >SALLE DE TRANSMISSIONS</text><text x="528.1" y="790.5" font-size="20" fill="#000" font-family="&quot;Liberation Sans&quot;, sans-serif" textLength="46.0" lengthAdjust="spacingAndGlyphs" >18.85</text><text x="579.5" y="790.5" font-size="13.5" fill="#000" font-family="&quot;Liberation Sans&quot;, sans-serif" textLength="18" lengthAdjust="spacingAndGlyphs" >m2</text><text x="714.5" y="754.2" font-size="20" fill="#000" font-family="&quot;Liberation Sans&quot;, sans-serif" textLength="89.5" lengthAdjust="spacingAndGlyphs" >SALLE DE</text><text x="824.8" y="754.2" font-size="20" fill="#000" font-family="&quot;Liberation Sans&quot;, sans-serif" textLength="57.5" lengthAdjust="spacingAndGlyphs" >SOINS</text><text x="768.2" y="790.5" font-size="20" fill="#000" font-family="&quot;Liberation Sans&quot;, sans-serif" textLength="47.7" lengthAdjust="spacingAndGlyphs" >22.32</text><text x="820.5" y="790.5" font-size="13.5" fill="#000" font-family="&quot;Liberation Sans&quot;, sans-serif" textLength="18" lengthAdjust="spacingAndGlyphs" >m2</text><text x="468.0" y="815" font-size="20" fill="#000" font-family="&quot;Liberation Sans&quot;, sans-serif" textLength="63.5" lengthAdjust="spacingAndGlyphs" >STOCK</text><text x="975.0" y="754" font-size="20" fill="#000" font-family="&quot;Liberation Sans&quot;, sans-serif" textLength="62.2" lengthAdjust="spacingAndGlyphs" >SALON</text><text x="977.1" y="790.3" font-size="20" fill="#000" font-family="&quot;Liberation Sans&quot;, sans-serif" textLength="45.8" lengthAdjust="spacingAndGlyphs" >19.99</text><text x="1027.5" y="790.3" font-size="13.5" fill="#000" font-family="&quot;Liberation Sans&quot;, sans-serif" textLength="18" lengthAdjust="spacingAndGlyphs" >m2</text><text x="806.0" y="728" font-size="14.5" fill="#1414ff" font-family="&quot;Liberation Sans&quot;, sans-serif" textLength="51.5" lengthAdjust="spacingAndGlyphs" >PERRIN</text><text x="805.1" y="742.5" font-size="11" fill="#1414ff" font-family="&quot;Liberation Sans&quot;, sans-serif" textLength="58.4" lengthAdjust="spacingAndGlyphs" >MURIELLE</text><text x="1171.9" y="737.9" font-size="15" fill="#1414ff" font-family="&quot;Liberation Sans&quot;, sans-serif" textLength="48.3" lengthAdjust="spacingAndGlyphs" >LEROY</text><text x="1163.7" y="751" font-size="12.5" fill="#1414ff" font-family="&quot;Liberation Sans&quot;, sans-serif" textLength="67.7" lengthAdjust="spacingAndGlyphs" >DOMINIQUE</text><text x="1194.5" y="759" font-size="7" fill="#1414ff" font-family="&quot;Liberation Sans&quot;, sans-serif" font-weight="bold" textLength="8" lengthAdjust="spacingAndGlyphs" >22</text><g transform="translate(1198.3,710.6) scale(1.0)" fill="#1414ff" shape-rendering="geometricPrecision"><circle cx="0" cy="2.3" r="2.4"/><rect x="-6.5" y="4.3" width="13" height="2"/><path d="M-2.3,4 H2.3 V10 L3.6,15 A1.2,1.2 0 0 1 1.4,16 L0,11.5 L-1.4,16 A1.2,1.2 0 0 1 -3.6,15 L-2.3,10 Z"/></g><g transform="translate(835,702) scale(0.975)" fill="#1414ff" shape-rendering="geometricPrecision"><circle cx="0" cy="2.3" r="2.4"/><rect x="-6.5" y="4.3" width="13" height="2"/><path d="M-2.3,4 H2.3 V10 L3.6,15 A1.2,1.2 0 0 1 1.4,16 L0,11.5 L-1.4,16 A1.2,1.2 0 0 1 -3.6,15 L-2.3,10 Z"/></g><text x="830.5" y="751" font-size="7" fill="#1414ff" font-family="&quot;Liberation Sans&quot;, sans-serif" font-weight="bold" textLength="9" lengthAdjust="spacingAndGlyphs" >22</text><rect x="809.5" y="193.5" width="67" height="33" fill="#dd80ff" stroke="#000" stroke-width="1" /><rect x="809.5" y="249.5" width="67" height="34" fill="#00bfff" stroke="#000" stroke-width="1" /><rect x="809.5" y="305.5" width="67" height="34" fill="#80a600" stroke="#000" stroke-width="1" /><text x="925.0" y="211.5" font-size="23" fill="#000" font-family="&quot;Liberation Sans&quot;, sans-serif" textLength="45.4" lengthAdjust="spacingAndGlyphs" >PDT</text><text x="925.0" y="267.4" font-size="23" fill="#000" font-family="&quot;Liberation Sans&quot;, sans-serif" textLength="44.2" lengthAdjust="spacingAndGlyphs" >PAT</text><text x="925.0" y="322.7" font-size="23" fill="#000" font-family="&quot;Liberation Sans&quot;, sans-serif" textLength="46.8" lengthAdjust="spacingAndGlyphs" >PAP</text><text x="933.9" y="223" font-size="9.5" fill="#000" font-family="&quot;Liberation Sans&quot;, sans-serif" textLength="37.9" lengthAdjust="spacingAndGlyphs" stroke="#000" stroke-width="0.3">Aire : .00</text><text x="1006.5" y="223" font-size="9.5" fill="#000" font-family="&quot;Liberation Sans&quot;, sans-serif" textLength="49.2" lengthAdjust="spacingAndGlyphs" stroke="#000" stroke-width="0.3">Effectif : .00</text><text x="933.9" y="278.3" font-size="9.5" fill="#000" font-family="&quot;Liberation Sans&quot;, sans-serif" textLength="48.2" lengthAdjust="spacingAndGlyphs" stroke="#000" stroke-width="0.3">Aire : 61.81</text><text x="1006.5" y="278.3" font-size="9.5" fill="#000" font-family="&quot;Liberation Sans&quot;, sans-serif" textLength="55" lengthAdjust="spacingAndGlyphs" stroke="#000" stroke-width="0.3">Effectif : 2.00</text><text x="933.9" y="333.8" font-size="9.5" fill="#000" font-family="&quot;Liberation Sans&quot;, sans-serif" textLength="48.2" lengthAdjust="spacingAndGlyphs" stroke="#000" stroke-width="0.3">Aire : 41.17</text><text x="1006.5" y="333.8" font-size="9.5" fill="#000" font-family="&quot;Liberation Sans&quot;, sans-serif" textLength="55" lengthAdjust="spacingAndGlyphs" stroke="#000" stroke-width="0.3">Effectif : 2.00</text><path d="M40.5,711.5 V776.5 H104.5" fill="none" stroke="#111" stroke-width="1" /><rect x="34.5" y="771.5" width="11" height="11" fill="none" stroke="#111" stroke-width="1" /><path d="M39.6,689 L47.2,697 L54.8,689 M47.2,697 V704" fill="none" stroke="#111" stroke-width="1.1" shape-rendering="geometricPrecision"/><path d="M113.5,763.5 L129,778 M129,763.5 L113.5,778" fill="none" stroke="#111" stroke-width="1.1" shape-rendering="geometricPrecision"/><rect x="11" y="361" width="205" height="16" fill="#d6d6d6" stroke="none" stroke-width="1" /><line x1="11" y1="360.5" x2="49.5" y2="360.5" stroke="#8c8c8c" stroke-width="1" /><line x1="11" y1="370.5" x2="49.5" y2="370.5" stroke="#9a9a9a" stroke-width="2" /><line x1="116" y1="360.5" x2="165.6" y2="360.5" stroke="#8c8c8c" stroke-width="1" /><line x1="116" y1="370.5" x2="165.6" y2="370.5" stroke="#9a9a9a" stroke-width="2" /><line x1="49.5" y1="360.5" x2="116" y2="360.5" stroke="#111" stroke-width="1" /><line x1="165.6" y1="360.5" x2="216.5" y2="360.5" stroke="#111" stroke-width="1" /><path d="M49.5,360.5 V369 H51.0 V377" fill="none" stroke="#111" stroke-width="1" /><path d="M116.5,360.5 V369 H115.0 V377" fill="none" stroke="#111" stroke-width="1" /><path d="M165.5,360.5 V369 H167.0 V377" fill="none" stroke="#111" stroke-width="1" /><rect x="674" y="361" width="635" height="13.5" fill="#d6d6d6" stroke="none" stroke-width="1" /><line x1="673.5" y1="360.5" x2="725" y2="360.5" stroke="#111" stroke-width="1" /><line x1="725" y1="360.5" x2="775" y2="360.5" stroke="#8c8c8c" stroke-width="1" /><line x1="723.5" y1="366.5" x2="776.5" y2="366.5" stroke="#8c8c8c" stroke-width="1" /><line x1="723.5" y1="368.5" x2="776.5" y2="368.5" stroke="#8c8c8c" stroke-width="1" /><path d="M725.5,360.5 V366.5 H724 V374.5" fill="none" stroke="#111" stroke-width="1" /><path d="M775.5,360.5 V366.5 H777 V374.5" fill="none" stroke="#111" stroke-width="1" /><line x1="775" y1="360.5" x2="818" y2="360.5" stroke="#111" stroke-width="1" /><line x1="818" y1="360.5" x2="869" y2="360.5" stroke="#8c8c8c" stroke-width="1" /><line x1="816.5" y1="366.5" x2="870.5" y2="366.5" stroke="#8c8c8c" stroke-width="1" /><line x1="816.5" y1="368.5" x2="870.5" y2="368.5" stroke="#8c8c8c" stroke-width="1" /><path d="M818.5,360.5 V366.5 H817 V374.5" fill="none" stroke="#111" stroke-width="1" /><path d="M869.5,360.5 V366.5 H871 V374.5" fill="none" stroke="#111" stroke-width="1" /><line x1="869" y1="360.5" x2="918" y2="360.5" stroke="#111" stroke-width="1" /><line x1="918" y1="360.5" x2="967" y2="360.5" stroke="#8c8c8c" stroke-width="1" /><line x1="916.5" y1="366.5" x2="968.5" y2="366.5" stroke="#8c8c8c" stroke-width="1" /><line x1="916.5" y1="368.5" x2="968.5" y2="368.5" stroke="#8c8c8c" stroke-width="1" /><path d="M918.5,360.5 V366.5 H917 V374.5" fill="none" stroke="#111" stroke-width="1" /><path d="M967.5,360.5 V366.5 H969 V374.5" fill="none" stroke="#111" stroke-width="1" /><line x1="967" y1="360.5" x2="1012" y2="360.5" stroke="#111" stroke-width="1" /><line x1="1012" y1="360.5" x2="1062" y2="360.5" stroke="#8c8c8c" stroke-width="1" /><line x1="1010.5" y1="366.5" x2="1063.5" y2="366.5" stroke="#8c8c8c" stroke-width="1" /><line x1="1010.5" y1="368.5" x2="1063.5" y2="368.5" stroke="#8c8c8c" stroke-width="1" /><path d="M1012.5,360.5 V366.5 H1011 V374.5" fill="none" stroke="#111" stroke-width="1" /><path d="M1062.5,360.5 V366.5 H1064 V374.5" fill="none" stroke="#111" stroke-width="1" /><line x1="1062" y1="360.5" x2="1134" y2="360.5" stroke="#111" stroke-width="1" /><line x1="1134" y1="360.5" x2="1187" y2="360.5" stroke="#8c8c8c" stroke-width="1" /><line x1="1132.5" y1="366.5" x2="1188.5" y2="366.5" stroke="#8c8c8c" stroke-width="1" /><line x1="1132.5" y1="368.5" x2="1188.5" y2="368.5" stroke="#8c8c8c" stroke-width="1" /><path d="M1134.5,360.5 V366.5 H1133 V374.5" fill="none" stroke="#111" stroke-width="1" /><path d="M1187.5,360.5 V366.5 H1189 V374.5" fill="none" stroke="#111" stroke-width="1" /><line x1="1187" y1="360.5" x2="1225" y2="360.5" stroke="#111" stroke-width="1" /><line x1="1225" y1="360.5" x2="1278" y2="360.5" stroke="#8c8c8c" stroke-width="1" /><line x1="1223.5" y1="366.5" x2="1279.5" y2="366.5" stroke="#8c8c8c" stroke-width="1" /><line x1="1223.5" y1="368.5" x2="1279.5" y2="368.5" stroke="#8c8c8c" stroke-width="1" /><path d="M1225.5,360.5 V366.5 H1224 V374.5" fill="none" stroke="#111" stroke-width="1" /><path d="M1278.5,360.5 V366.5 H1280 V374.5" fill="none" stroke="#111" stroke-width="1" /><line x1="1278" y1="360.5" x2="1309.5" y2="360.5" stroke="#111" stroke-width="1" /><rect x="1297" y="451" width="13" height="54.5" fill="#d6d6d6" stroke="none" stroke-width="1" /><path d="M1309.5,451 H1303.5 V505.5 H1309.5" fill="none" stroke="#111" stroke-width="1" /><line x1="1300.5" y1="454" x2="1300.5" y2="502.5" stroke="#8c8c8c" stroke-width="1" /><line x1="1306.5" y1="451" x2="1306.5" y2="505.5" stroke="#8c8c8c" stroke-width="1" /><rect x="1297" y="740" width="13" height="53" fill="#d6d6d6" stroke="none" stroke-width="1" /><path d="M1309.5,740 H1303.5 V793 H1309.5" fill="none" stroke="#111" stroke-width="1" /><line x1="1300.5" y1="743" x2="1300.5" y2="790" stroke="#8c8c8c" stroke-width="1" /><line x1="1306.5" y1="740" x2="1306.5" y2="793" stroke="#8c8c8c" stroke-width="1" /><rect x="223.5" y="360.5" width="9" height="10" fill="#d6d6d6" stroke="#ff0a3c" stroke-width="1" /><rect x="364.5" y="360.5" width="9" height="10" fill="#d6d6d6" stroke="#111" stroke-width="1" /><line x1="366.5" y1="360.5" x2="366.5" y2="370.5" stroke="#ff0a3c" stroke-width="1" /><line x1="370.5" y1="360.5" x2="370.5" y2="370.5" stroke="#ff0a3c" stroke-width="1" /><rect x="511.5" y="360.5" width="8" height="10" fill="#d6d6d6" stroke="#ff0a3c" stroke-width="1" /><line x1="188" y1="377.5" x2="223" y2="377.5" stroke="#1e78ff" stroke-width="1" /><line x1="57" y1="377.5" x2="61" y2="377.5" stroke="#1e78ff" stroke-width="1" /><line x1="223.5" y1="360" x2="223.5" y2="370" stroke="#1e78ff" stroke-width="1" /><line x1="1102" y1="375.5" x2="1116" y2="375.5" stroke="#1e78ff" stroke-width="1" /><line x1="660" y1="375.5" x2="665" y2="375.5" stroke="#1e78ff" stroke-width="1" /><line x1="323.5" y1="540" x2="323.5" y2="544" stroke="#111" stroke-width="1" /><line x1="358.5" y1="540" x2="358.5" y2="544" stroke="#111" stroke-width="1" /><line x1="379.5" y1="540" x2="379.5" y2="544" stroke="#111" stroke-width="1" /><line x1="414.5" y1="540" x2="414.5" y2="544" stroke="#111" stroke-width="1" /><line x1="526.5" y1="540" x2="526.5" y2="544" stroke="#111" stroke-width="1" /><line x1="561.5" y1="540" x2="561.5" y2="544" stroke="#111" stroke-width="1" /><line x1="296" y1="440.5" x2="299" y2="440.5" stroke="#111" stroke-width="1" /><line x1="439" y1="440.5" x2="442" y2="440.5" stroke="#111" stroke-width="1" /><line x1="590" y1="440.5" x2="593" y2="440.5" stroke="#111" stroke-width="1" /><line x1="296" y1="476.5" x2="299" y2="476.5" stroke="#111" stroke-width="1" /><line x1="439" y1="476.5" x2="442" y2="476.5" stroke="#111" stroke-width="1" /><line x1="590" y1="476.5" x2="593" y2="476.5" stroke="#111" stroke-width="1" /><line x1="862" y1="490.5" x2="865" y2="490.5" stroke="#111" stroke-width="1" /><line x1="862" y1="525.5" x2="865" y2="525.5" stroke="#111" stroke-width="1" /><line x1="928.5" y1="491" x2="928.5" y2="494" stroke="#111" stroke-width="1" /><line x1="964.5" y1="491" x2="964.5" y2="494" stroke="#111" stroke-width="1" /><line x1="1046" y1="538.5" x2="1049" y2="538.5" stroke="#111" stroke-width="1" /><line x1="1046" y1="573.5" x2="1049" y2="573.5" stroke="#111" stroke-width="1" /><line x1="786.5" y1="580" x2="786.5" y2="587" stroke="#111" stroke-width="1" /><line x1="839.5" y1="580" x2="839.5" y2="587" stroke="#111" stroke-width="1" /><line x1="928.5" y1="580" x2="928.5" y2="587" stroke="#111" stroke-width="1" /><line x1="964.5" y1="580" x2="964.5" y2="587" stroke="#111" stroke-width="1" /><line x1="58" y1="520.5" x2="61" y2="520.5" stroke="#111" stroke-width="1" /><line x1="58" y1="556.5" x2="61" y2="556.5" stroke="#111" stroke-width="1" /><line x1="121.5" y1="579" x2="121.5" y2="587" stroke="#111" stroke-width="1" /><line x1="157.5" y1="579" x2="157.5" y2="587" stroke="#111" stroke-width="1" /><line x1="139.5" y1="659" x2="139.5" y2="666" stroke="#111" stroke-width="1" /><line x1="348" y1="763.5" x2="352" y2="763.5" stroke="#111" stroke-width="1" /><line x1="423" y1="763.5" x2="427" y2="763.5" stroke="#111" stroke-width="1" /><line x1="944.5" y1="659" x2="944.5" y2="663" stroke="#111" stroke-width="1" /><line x1="980.5" y1="659" x2="980.5" y2="663" stroke="#111" stroke-width="1" /><line x1="495.5" y1="659" x2="495.5" y2="663" stroke="#111" stroke-width="1" /><line x1="545.5" y1="659" x2="545.5" y2="663" stroke="#111" stroke-width="1" /><line x1="550.5" y1="659" x2="550.5" y2="663" stroke="#111" stroke-width="1" /><line x1="599.5" y1="659" x2="599.5" y2="663" stroke="#111" stroke-width="1" /><line x1="603.5" y1="659" x2="603.5" y2="663" stroke="#111" stroke-width="1" /><line x1="643.5" y1="659" x2="643.5" y2="663" stroke="#111" stroke-width="1" /><line x1="648.5" y1="659" x2="648.5" y2="663" stroke="#111" stroke-width="1" /><line x1="683.5" y1="659" x2="683.5" y2="663" stroke="#111" stroke-width="1" /><line x1="835.5" y1="659" x2="835.5" y2="663" stroke="#111" stroke-width="1" /><line x1="876.5" y1="659" x2="876.5" y2="663" stroke="#111" stroke-width="1" /><line x1="688" y1="708.5" x2="691" y2="708.5" stroke="#111" stroke-width="1" /><line x1="688" y1="742.5" x2="691" y2="742.5" stroke="#111" stroke-width="1" /><line x1="1103" y1="596.5" x2="1116" y2="596.5" stroke="#111" stroke-width="1" /><line x1="1103" y1="649.5" x2="1116" y2="649.5" stroke="#111" stroke-width="1" /><path d="M602.5,663 L607,682.7 L623.3,697.6 L642.7,702.7 V663" fill="none" stroke="#9c9c9c" stroke-width="1" shape-rendering="geometricPrecision"/><path d="M834.8,663 L839.3,682.7 L855.6,697.6 L875.6,702.7 V663" fill="none" stroke="#9c9c9c" stroke-width="1" shape-rendering="geometricPrecision"/><path d="M687.4,707.5 L671,711 L659,721.4 L653,740.8 M653,742.5 H687.4" fill="none" stroke="#9c9c9c" stroke-width="1" shape-rendering="geometricPrecision"/><path d="M426.8,727.4 L444.7,731.9 L458,746.8 L463,763.1 H426.8" fill="none" stroke="#9c9c9c" stroke-width="1" shape-rendering="geometricPrecision"/></g><g clip-path="url(#cpPlan)"><line x1="1309.5" y1="564" x2="1309.5" y2="596.5" stroke="#111" stroke-width="1" /><line x1="1309.5" y1="658.5" x2="1309.5" y2="706" stroke="#111" stroke-width="1" /><line x1="1297" y1="596.5" x2="1310" y2="596.5" stroke="#111" stroke-width="1" /><line x1="1297" y1="658.5" x2="1310" y2="658.5" stroke="#111" stroke-width="1" /></g><text x="1511.7" y="160" font-size="11.5" fill="#1b1b1b" font-family="&quot;Liberation Sans&quot;, sans-serif" textLength="77.0" lengthAdjust="spacingAndGlyphs" stroke="#1b1b1b" stroke-width="0.25">Palettes d&#x27;outils</text><line x1="1527.5" y1="165" x2="1527.5" y2="829" stroke="#a9a9a9" stroke-width="1" /><path d="M1527.5,165.5 H1512 L1508.5,169 V273 L1512,277.5 H1527.5" fill="#f0f0f0" stroke="#9a9a9a" stroke-width="1" shape-rendering="geometricPrecision"/><rect x="1527" y="166" width="2" height="111" fill="#f0f0f0" stroke="none" stroke-width="1" /><path d="M1527.5,278.5 H1512 L1508.5,282 V386 L1512,390.5 H1527.5" fill="#ececec" stroke="#9a9a9a" stroke-width="1" shape-rendering="geometricPrecision"/><text transform="translate(1522.5,255.5) rotate(-90)" font-family="&quot;Liberation Sans&quot;, sans-serif" font-size="11.5" font-weight="bold" fill="#111" textLength="67" lengthAdjust="spacingAndGlyphs">LIRIS-FM-Gg</text><text transform="translate(1522,354.5) rotate(-90)" font-family="&quot;Liberation Sans&quot;, sans-serif" font-size="11" fill="#222" textLength="38" lengthAdjust="spacingAndGlyphs">Rev. Sol</text><line x1="1536.5" y1="443" x2="1536.5" y2="519" stroke="#000" stroke-width="2" /><polygon points="1529.5,441.5 1543.5,441.5 1536.5,448" fill="#000" stroke="none" stroke-width="1" /><polygon points="1529.5,520.5 1543.5,520.5 1536.5,514" fill="#000" stroke="none" stroke-width="1" /><text x="1542.7" y="225.2" font-size="11.5" fill="#111" font-family="&quot;Liberation Sans&quot;, sans-serif" textLength="50.6" lengthAdjust="spacingAndGlyphs" stroke="#111" stroke-width="0.25">01 Contour</text><text x="1541.8" y="238.3" font-size="11.5" fill="#111" font-family="&quot;Liberation Sans&quot;, sans-serif" textLength="56.5" lengthAdjust="spacingAndGlyphs" stroke="#111" stroke-width="0.25">Rectanglaire</text><text x="1612.4" y="225.2" font-size="11.5" fill="#111" font-family="&quot;Liberation Sans&quot;, sans-serif" textLength="49.5" lengthAdjust="spacingAndGlyphs" stroke="#111" stroke-width="0.25">02 Contour</text><text x="1625.5" y="238.3" font-size="11.5" fill="#111" font-family="&quot;Liberation Sans&quot;, sans-serif" textLength="25.9" lengthAdjust="spacingAndGlyphs" stroke="#111" stroke-width="0.25">d&#x27;Aire</text><text x="1688.5" y="225.2" font-size="11.5" fill="#111" font-family="&quot;Liberation Sans&quot;, sans-serif" textLength="36.1" lengthAdjust="spacingAndGlyphs" stroke="#111" stroke-width="0.25">03 Surf.</text><text x="1679.0" y="238.3" font-size="11.5" fill="#111" font-family="&quot;Liberation Sans&quot;, sans-serif" textLength="55.8" lengthAdjust="spacingAndGlyphs" stroke="#111" stroke-width="0.25">Soustractive</text><text x="1545.6" y="293.2" font-size="11.5" fill="#111" font-family="&quot;Liberation Sans&quot;, sans-serif" textLength="44.8" lengthAdjust="spacingAndGlyphs" stroke="#111" stroke-width="0.25">04 Affiche</text><text x="1557.9" y="306.3" font-size="11.5" fill="#111" font-family="&quot;Liberation Sans&quot;, sans-serif" textLength="23.4" lengthAdjust="spacingAndGlyphs" stroke="#111" stroke-width="0.25">Topo</text><text x="1607.5" y="293.2" font-size="11.5" fill="#111" font-family="&quot;Liberation Sans&quot;, sans-serif" textLength="61.4" lengthAdjust="spacingAndGlyphs" stroke="#111" stroke-width="0.25">05 Centroides</text><text x="1686.3" y="293.2" font-size="11.5" fill="#111" font-family="&quot;Liberation Sans&quot;, sans-serif" textLength="42.7" lengthAdjust="spacingAndGlyphs" stroke="#111" stroke-width="0.25">06 Calcul</text><text x="1538.9" y="360.9" font-size="11.5" fill="#111" font-family="&quot;Liberation Sans&quot;, sans-serif" textLength="61.4" lengthAdjust="spacingAndGlyphs" stroke="#111" stroke-width="0.25">07 Personnes</text><text x="1630.8" y="360.9" font-size="11.5" fill="#111" font-family="&quot;Liberation Sans&quot;, sans-serif" textLength="12.7" lengthAdjust="spacingAndGlyphs" stroke="#111" stroke-width="0.25">08</text><text x="1608.0" y="374" font-size="11.5" fill="#111" font-family="&quot;Liberation Sans&quot;, sans-serif" textLength="61.7" lengthAdjust="spacingAndGlyphs" stroke="#111" stroke-width="0.25">Info-Personne</text><text x="1674.5" y="360.9" font-size="11.5" fill="#111" font-family="&quot;Liberation Sans&quot;, sans-serif" textLength="62.4" lengthAdjust="spacingAndGlyphs" stroke="#111" stroke-width="0.25">09 Renseigne</text><text x="1697.3" y="374" font-size="11.5" fill="#111" font-family="&quot;Liberation Sans&quot;, sans-serif" textLength="19.7" lengthAdjust="spacingAndGlyphs" stroke="#111" stroke-width="0.25">Bloc</text><text x="1549.1" y="428.4" font-size="11.5" fill="#111" font-family="&quot;Liberation Sans&quot;, sans-serif" textLength="38.9" lengthAdjust="spacingAndGlyphs" stroke="#111" stroke-width="0.25">10 Modif</text><text x="1551.5" y="441.5" font-size="11.5" fill="#111" font-family="&quot;Liberation Sans&quot;, sans-serif" textLength="36.5" lengthAdjust="spacingAndGlyphs" stroke="#111" stroke-width="0.25">Attributs</text><text x="1611.0" y="428.4" font-size="11.5" fill="#111" font-family="&quot;Liberation Sans&quot;, sans-serif" textLength="56.4" lengthAdjust="spacingAndGlyphs" stroke="#111" stroke-width="0.25">11 dataBase</text><text x="1674.5" y="428.4" font-size="11.5" fill="#111" font-family="&quot;Liberation Sans&quot;, sans-serif" textLength="65.3" lengthAdjust="spacingAndGlyphs" stroke="#111" stroke-width="0.25">12 INI Zonage</text><text x="1545.6" y="496" font-size="11.5" fill="#111" font-family="&quot;Liberation Sans&quot;, sans-serif" textLength="48.9" lengthAdjust="spacingAndGlyphs" stroke="#111" stroke-width="0.25">13 Zonage</text><text x="1615.3" y="496" font-size="11.5" fill="#111" font-family="&quot;Liberation Sans&quot;, sans-serif" textLength="43.4" lengthAdjust="spacingAndGlyphs" stroke="#111" stroke-width="0.25">14 Efface</text><text x="1620.6" y="509.5" font-size="11.5" fill="#111" font-family="&quot;Liberation Sans&quot;, sans-serif" textLength="35.4" lengthAdjust="spacingAndGlyphs" stroke="#111" stroke-width="0.25">Zonage</text><text x="1700.3" y="496" font-size="11.5" fill="#111" font-family="&quot;Liberation Sans&quot;, sans-serif" textLength="10.9" lengthAdjust="spacingAndGlyphs" stroke="#111" stroke-width="0.25">15</text><text x="1675.5" y="509.5" font-size="11.5" fill="#111" font-family="&quot;Liberation Sans&quot;, sans-serif" textLength="63.7" lengthAdjust="spacingAndGlyphs" stroke="#111" stroke-width="0.25">Efface-Erreurs</text><text x="1542.7" y="564" font-size="11.5" fill="#111" font-family="&quot;Liberation Sans&quot;, sans-serif" textLength="54.1" lengthAdjust="spacingAndGlyphs" stroke="#111" stroke-width="0.25">Info-Espace</text><rect x="1558.5" y="186.5" width="27" height="18.5" fill="#c8c8c8" stroke="#ff5a6e" stroke-width="1" /><polygon points="1627.5,182.5 1653.5,182.5 1653.5,208.5 1641.02,208.5 1641.02,196.02 1627.5,196.02" fill="#c8c8c8" stroke="#ff5a6e" stroke-width="1" /><polygon points="1696.5,182.5 1722.5,182.5 1722.5,208.5 1710.02,208.5 1710.02,196.02 1696.5,196.02" fill="#c8c8c8" stroke="#333" stroke-width="1" /><rect x="1702.5" y="190.5" width="8" height="4.5" fill="#fff" stroke="#ff5a6e" stroke-width="1" /><rect x="1558.5" y="250.5" width="17" height="17" fill="none" stroke="#3030b0" stroke-width="1" /><rect x="1565.5" y="256.5" width="20" height="20" fill="none" stroke="#ff5a6e" stroke-width="1" /><polygon points="1627.5,250.5 1653.5,250.5 1653.5,276.5 1641.02,276.5 1641.02,264.02 1627.5,264.02" fill="#c8c8c8" stroke="#ff5a6e" stroke-width="1" /><path d="M1631.5,258 H1638 L1640,261 H1647.5 V270 H1631.5 Z" fill="#ffc000" stroke="#6060a0" stroke-width="1" shape-rendering="geometricPrecision"/><path d="M1717,255 V252 H1697.5 L1708.225,262.75 L1697.5,273.5 H1717 V270.5" fill="none" stroke="#1a1a9a" stroke-width="1.8" shape-rendering="geometricPrecision"/><path d="M1580,323 V320 H1560 L1571.0,330.5 L1560,341 H1580 V338" fill="none" stroke="#1a1a9a" stroke-width="1.8" shape-rendering="geometricPrecision"/><path d="M1630.5,318.5 H1647 L1653.5,324 V339.5 H1630.5 Z" fill="#ffc000" stroke="#333" stroke-width="1" shape-rendering="geometricPrecision"/><path d="M1647,318.5 V324 H1653.5" fill="#ffe070" stroke="#333" stroke-width="0.8" shape-rendering="geometricPrecision"/><g transform="translate(1638,316.5) scale(1.0166666666666666)" fill="#000" shape-rendering="geometricPrecision"><circle cx="0" cy="4.5" r="4.5"/><rect x="-14" y="9" width="28" height="2.6"/><path d="M-4.5,9 H4.5 V18 L8,30 H4 L0,20 L-4,30 H-8 L-4.5,18 Z"/></g><path d="M1695.5,322.5 H1717 L1723.5,328 V340.5 H1695.5 Z" fill="#ffc000" stroke="#333" stroke-width="1" shape-rendering="geometricPrecision"/><path d="M1717,322.5 V328 H1723.5" fill="#ffe070" stroke="#333" stroke-width="0.8" shape-rendering="geometricPrecision"/><line x1="1699" y1="329.5" x2="1711.8" y2="329.5" stroke="#7a5a00" stroke-width="0.8" /><line x1="1699" y1="332.7" x2="1711.8" y2="332.7" stroke="#7a5a00" stroke-width="0.8" /><line x1="1699" y1="335.9" x2="1711.8" y2="335.9" stroke="#7a5a00" stroke-width="0.8" /><path d="M1557.5,388.5 H1579 L1585.5,394 V407.5 H1557.5 Z" fill="#ffc000" stroke="#333" stroke-width="1" shape-rendering="geometricPrecision"/><path d="M1579,388.5 V394 H1585.5" fill="#ffe070" stroke="#333" stroke-width="0.8" shape-rendering="geometricPrecision"/><line x1="1561" y1="395.5" x2="1573.8" y2="395.5" stroke="#7a5a00" stroke-width="0.8" /><line x1="1561" y1="398.7" x2="1573.8" y2="398.7" stroke="#7a5a00" stroke-width="0.8" /><line x1="1561" y1="401.9" x2="1573.8" y2="401.9" stroke="#7a5a00" stroke-width="0.8" /><path d="M1563,404 L1575,386 L1578,388 L1566,406 Z" fill="#a05050" stroke="#402020" stroke-width="0.8" shape-rendering="geometricPrecision"/><rect x="1626.5" y="385.5" width="28" height="28" fill="#fff" stroke="#555" stroke-width="1" /><rect x="1627" y="386" width="27" height="2.5" fill="#d02020" stroke="none" stroke-width="1" /><line x1="1627" y1="390.0" x2="1654" y2="390.0" stroke="#666" stroke-width="0.8" /><line x1="1627" y1="393.5" x2="1654" y2="393.5" stroke="#666" stroke-width="0.8" /><line x1="1627" y1="397.0" x2="1654" y2="397.0" stroke="#666" stroke-width="0.8" /><line x1="1627" y1="400.5" x2="1654" y2="400.5" stroke="#666" stroke-width="0.8" /><line x1="1627" y1="404.0" x2="1654" y2="404.0" stroke="#666" stroke-width="0.8" /><line x1="1627" y1="407.5" x2="1654" y2="407.5" stroke="#666" stroke-width="0.8" /><line x1="1627" y1="411.0" x2="1654" y2="411.0" stroke="#666" stroke-width="0.8" /><line x1="1635.5" y1="386" x2="1635.5" y2="413" stroke="#666" stroke-width="0.8" /><line x1="1645.5" y1="386" x2="1645.5" y2="413" stroke="#666" stroke-width="0.8" /><rect x="1695.5" y="385.0" width="28" height="29.0" fill="#c8c8c8" stroke="#555" stroke-width="1" /><path d="M1696,385.5 H1709.0 L1696,397.55 Z" fill="#ffc000" stroke="none" stroke-width="1" shape-rendering="geometricPrecision"/><path d="M1709.0,385.5 H1723 V403.35 H1713.2 L1703.4,393.2 Z" fill="#0f78c0" stroke="none" stroke-width="1" shape-rendering="geometricPrecision"/><path d="M1713.2,403.35 H1723 V413.5 H1720.2 Z" fill="#ff9090" stroke="none" stroke-width="1" shape-rendering="geometricPrecision"/><rect x="1557.5" y="453.0" width="28" height="29.0" fill="#c8c8c8" stroke="#555" stroke-width="1" /><path d="M1558,453.5 H1571.0 L1558,465.55 Z" fill="#ffc000" stroke="none" stroke-width="1" shape-rendering="geometricPrecision"/><path d="M1571.0,453.5 H1585 V471.35 H1575.2 L1565.4,461.2 Z" fill="#0f78c0" stroke="none" stroke-width="1" shape-rendering="geometricPrecision"/><path d="M1575.2,471.35 H1585 V481.5 H1582.2 Z" fill="#ff9090" stroke="none" stroke-width="1" shape-rendering="geometricPrecision"/><rect x="1626.5" y="453.0" width="28" height="29.0" fill="#c8c8c8" stroke="#555" stroke-width="1" /><path d="M1627,453.5 H1640.0 L1627,465.55 Z" fill="#ffc000" stroke="none" stroke-width="1" shape-rendering="geometricPrecision"/><path d="M1640.0,453.5 H1654 V471.35 H1644.2 L1634.4,461.2 Z" fill="#0f78c0" stroke="none" stroke-width="1" shape-rendering="geometricPrecision"/><path d="M1644.2,471.35 H1654 V481.5 H1651.2 Z" fill="#ff9090" stroke="none" stroke-width="1" shape-rendering="geometricPrecision"/><path d="M1626,452.5 L1654,481.5 M1654,452.5 L1626,481.5" fill="none" stroke="#e01010" stroke-width="1.2" shape-rendering="geometricPrecision"/><path d="M1700,460 C1698,454 1706,452 1710,455 C1714,451 1722,453 1721,459 C1726,461 1725,469 1719,470 C1717,474 1710,474 1708,471 C1703,473 1697,469 1700,465 C1696,464 1697,460 1700,460 Z" fill="#ffc000" stroke="#b08000" stroke-width="0.8" shape-rendering="geometricPrecision"/><path d="M1712,471 C1712,476 1709,479 1704,481" fill="none" stroke="#8a6000" stroke-width="1.5" shape-rendering="geometricPrecision"/><path d="M1699,454 L1723,477 M1723,454 L1699,477" fill="none" stroke="#ff6060" stroke-width="1" shape-rendering="geometricPrecision"/><path d="M1559.5,522.5 H1579 L1585.5,528 V543.5 H1559.5 Z" fill="#ffc000" stroke="#333" stroke-width="1" shape-rendering="geometricPrecision"/><path d="M1579,522.5 V528 H1585.5" fill="#ffe070" stroke="#333" stroke-width="0.8" shape-rendering="geometricPrecision"/><g transform="translate(1569,520.5) scale(0.9666666666666667)" fill="#000" shape-rendering="geometricPrecision"><circle cx="0" cy="4.5" r="4.5"/><rect x="-14" y="9" width="28" height="2.6"/><path d="M-4.5,9 H4.5 V18 L8,30 H4 L0,20 L-4,30 H-8 L-4.5,18 Z"/></g><rect x="18" y="812.5" width="1.3" height="8" fill="#111" stroke="none" stroke-width="1" /><polygon points="24,812.5 24,820.5 20,816.5" fill="#111" stroke="none" stroke-width="1" /><polygon points="40,812.5 40,820.5 36,816.5" fill="#111" stroke="none" stroke-width="1" /><polygon points="53.5,812.5 53.5,820.5 57.5,816.5" fill="#111" stroke="none" stroke-width="1" /><rect x="75" y="812.5" width="1.3" height="8" fill="#111" stroke="none" stroke-width="1" /><polygon points="70,812.5 70,820.5 74,816.5" fill="#111" stroke="none" stroke-width="1" /><path d="M84,807 L91,823.5 H139 L143,818 L149,807" fill="#fcfcfc" stroke="#555" stroke-width="1" shape-rendering="geometricPrecision"/><text x="91.8" y="820.2" font-size="12" fill="#1b1b1b" font-family="&quot;Liberation Sans&quot;, sans-serif" font-weight="bold" textLength="43.9" lengthAdjust="spacingAndGlyphs" >Modèle</text><path d="M141,823.5 L150,807.5 H237 L230,823.5 Z" fill="#f4f4f4" stroke="#777" stroke-width="1" shape-rendering="geometricPrecision"/><text x="149.5" y="820.2" font-size="12" fill="#1b1b1b" font-family="&quot;Liberation Sans&quot;, sans-serif" textLength="74.4" lengthAdjust="spacingAndGlyphs" stroke="#1b1b1b" stroke-width="0.25">Présentation1</text><rect x="12.5" y="838.5" width="11" height="10" fill="#d24a4a" stroke="none" stroke-width="1" /><path d="M15.5,841 L20.5,846 M20.5,841 L15.5,846" fill="none" stroke="#fff" stroke-width="1.2" shape-rendering="geometricPrecision"/><path d="M16,856.5 H20 M16.5,856.5 V861 H19.5 V856.5 M18,861 V864.5 M15,861.5 H21" fill="none" stroke="#222" stroke-width="1" /><clipPath id="cpCmd"><rect x="27" y="834.5" width="1719" height="60"/></clipPath><g clip-path="url(#cpCmd)"><text x="28" y="840.4" font-size="11" fill="#111" font-family="&quot;Liberation Mono&quot;, monospace" textLength="197.25" lengthAdjust="spacingAndGlyphs" >Commande: MISE_A_JOUR_DATABASE</text><text x="28" y="857" font-size="11" fill="#111" font-family="&quot;Liberation Mono&quot;, monospace" textLength="92.05" lengthAdjust="spacingAndGlyphs" >Fin traitement</text><text x="28" y="873.6" font-size="11" fill="#111" font-family="&quot;Liberation Mono&quot;, monospace" textLength="328.75" lengthAdjust="spacingAndGlyphs" >Blocs : 1   Contours : 1    OK : 1       Echec : 0</text><text x="28" y="890.2" font-size="11" fill="#111" font-family="&quot;Liberation Mono&quot;, monospace" textLength="92.05" lengthAdjust="spacingAndGlyphs" >Fin traitement</text></g><rect x="27" y="833" width="1719" height="1.5" fill="#9c9c9c" stroke="none" stroke-width="1" /><rect x="26" y="833" width="1" height="58" fill="#a0a8b4" stroke="none" stroke-width="1" />
</svg>
</body></html>
